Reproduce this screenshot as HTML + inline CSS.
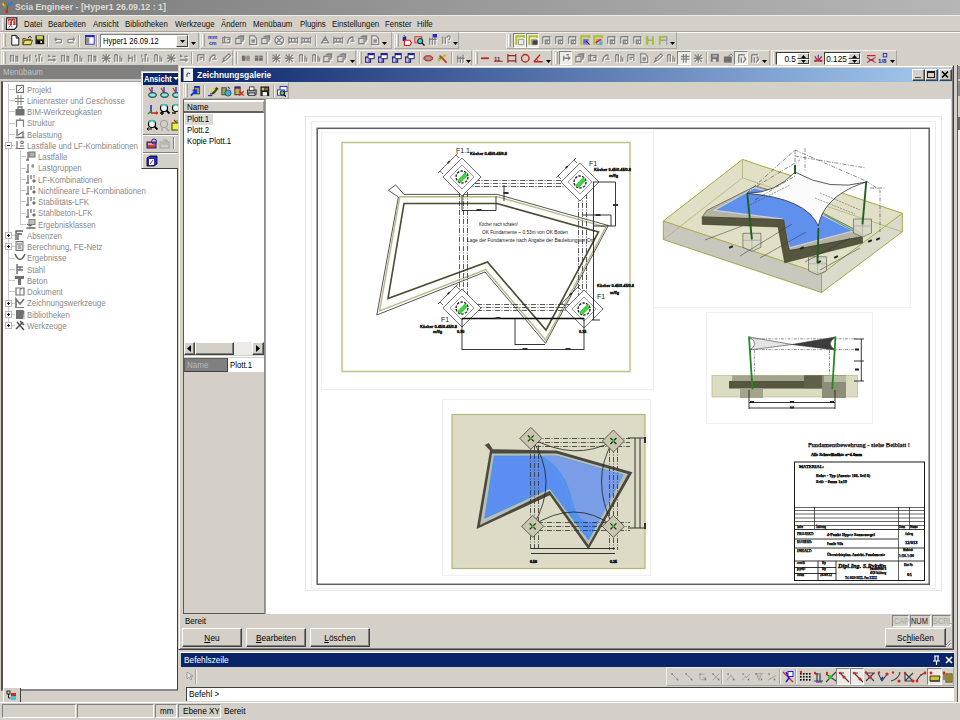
<!DOCTYPE html>
<html><head><meta charset="utf-8"><style>
*{box-sizing:border-box;margin:0;padding:0}
html,body{width:960px;height:720px;overflow:hidden;background:#d4d0c8;font-family:"Liberation Sans",sans-serif;font-size:7.9px;color:#000}
.a{position:absolute}
.t{position:absolute;white-space:nowrap;line-height:10px;transform-origin:0 0}
.i{position:absolute;overflow:visible}
.grip{position:absolute;width:3px;border-left:1px solid #fff;border-right:1px solid #a4a29c}
.sep{position:absolute;width:2px;border-left:1px solid #a4a29c;border-right:1px solid #f4f4f0}
.tbar{position:absolute;border:1px solid;border-color:#f0efea #a8a6a0 #a8a6a0 #f0efea}
.btn{position:absolute;border:1px solid;border-color:#fff #404040 #404040 #fff;box-shadow:inset -1px -1px #808080;text-align:center;font-size:7.9px;line-height:16px}
.tree .t{color:#8a8a8a}
</style></head><body>
<div class="a" style="left:0px;top:0px;width:960px;height:15px;background:linear-gradient(90deg,#7a7a7a,#9a9a9a 50%,#b6b6b6)"></div>
<div class="a" style="left:0px;top:15px;width:960px;height:1px;background:#ecebe6"></div>
<svg class="i" style="left:1px;top:1px" width="13" height="13" viewBox="0 0 13 13"><path d="M2 3 L5 4 L6 12" stroke="#d02020" stroke-width="2.2" fill="none"/><path d="M1.5 2.5 L4 5" stroke="#f0c020" stroke-width="2"/><path d="M4 3 L6 9" stroke="#40c040" stroke-width="2"/><path d="M7 5 L8 3 L12 2" stroke="#2080f0" stroke-width="2.2" fill="none"/><path d="M6.5 5 L6 11" stroke="#e02020" stroke-width="1.5"/></svg>
<div class="t" style="left:15px;top:2px;font-size:8.9px;transform:scaleX(0.885);font-weight:bold;font-size:9.94px;color:#dedcd6">Scia Engineer - [Hyper1 26.09.12 : 1]</div>
<div class="grip" style="left:2px;top:18px;height:12px"></div>
<svg class="i" style="left:6px;top:17px" width="12" height="13" viewBox="0 0 12 13"><path d="M0.8 0.8h10v9l-2.5 2.5h-8z" fill="#fff" stroke="#202020" stroke-width="1.2"/><rect x="2" y="2" width="7.5" height="6" fill="#e02828"/><path d="M3 8V4h2M6.5 8V4h2M3 6h1.5M6.5 6h1.5" stroke="#fff" stroke-width="1"/><path d="M2.5 10.5l2-2 2 1.5" stroke="#404040" fill="none"/></svg>
<div class="t" style="left:24px;top:19px;font-size:8.9px;transform:scaleX(0.885);color:#101010">Datei</div>
<div class="t" style="left:48px;top:19px;font-size:8.9px;transform:scaleX(0.885);color:#101010">Bearbeiten</div>
<div class="t" style="left:93px;top:19px;font-size:8.9px;transform:scaleX(0.885);color:#101010">Ansicht</div>
<div class="t" style="left:125px;top:19px;font-size:8.9px;transform:scaleX(0.885);color:#101010">Bibliotheken</div>
<div class="t" style="left:175px;top:19px;font-size:8.9px;transform:scaleX(0.885);color:#101010">Werkzeuge</div>
<div class="t" style="left:221px;top:19px;font-size:8.9px;transform:scaleX(0.885);color:#101010">Ändern</div>
<div class="t" style="left:253px;top:19px;font-size:8.9px;transform:scaleX(0.885);color:#101010">Menübaum</div>
<div class="t" style="left:300px;top:19px;font-size:8.9px;transform:scaleX(0.885);color:#101010">Plugins</div>
<div class="t" style="left:332px;top:19px;font-size:8.9px;transform:scaleX(0.885);color:#101010">Einstellungen</div>
<div class="t" style="left:385px;top:19px;font-size:8.9px;transform:scaleX(0.885);color:#101010">Fenster</div>
<div class="t" style="left:417px;top:19px;font-size:8.9px;transform:scaleX(0.885);color:#101010">Hilfe</div>
<div class="a" style="left:0px;top:31px;width:960px;height:1px;background:#a8a59e"></div>
<div class="a" style="left:0px;top:32px;width:960px;height:1px;background:#fff"></div>
<div class="tbar" style="left:1px;top:32px;width:198px;height:17px"></div>
<div class="grip" style="left:3px;top:34px;height:13px"></div>
<svg class="i" style="left:10px;top:35px" width="10.5" height="10.5" viewBox="0 0 12 12"><path d="M2 0.5h5l3 3v8h-8z" fill="#fff" stroke="#000"/><path d="M7 0.5v3h3" fill="none" stroke="#000"/></svg>
<svg class="i" style="left:22px;top:35px" width="10.5" height="10.5" viewBox="0 0 12 12"><path d="M1 4h3l1 1h5v6h-9z" fill="#c8c040" stroke="#404000"/><path d="M1 11l2-5h9l-2 5z" fill="#e8e070" stroke="#404000"/><path d="M7 3 Q9 0 11 3" stroke="#000" fill="none"/></svg>
<svg class="i" style="left:35px;top:35px" width="10.5" height="10.5" viewBox="0 0 12 12"><rect x="0.5" y="0.5" width="10" height="10" fill="#202020"/><rect x="2" y="1" width="7" height="4" fill="#d0d040"/><rect x="3" y="7" width="5" height="3" fill="#000"/><rect x="6" y="7" width="2" height="2" fill="#fff"/></svg>
<div class="sep" style="left:47px;top:35px;height:12px"></div>
<svg class="i" style="left:53px;top:35px" width="10.5" height="10.5" viewBox="0 0 12 12"><path d="M2 5 L4 3 M2 5 L4 7 M2 5h6a2 2 0 0 1 0 4h-5" transform="translate(1,1)" stroke="#ffffff" stroke-width="1.5" fill="none"/><path d="M2 5 L4 3 M2 5 L4 7 M2 5h6a2 2 0 0 1 0 4h-5" stroke="#828282" stroke-width="1.5" fill="none"/></svg>
<svg class="i" style="left:66px;top:35px" width="10.5" height="10.5" viewBox="0 0 12 12"><path d="M10 5 L8 3 M10 5 L8 7 M10 5h-6a2 2 0 0 0 0 4h5" transform="translate(1,1)" stroke="#ffffff" stroke-width="1.5" fill="none"/><path d="M10 5 L8 3 M10 5 L8 7 M10 5h-6a2 2 0 0 0 0 4h5" stroke="#828282" stroke-width="1.5" fill="none"/></svg>
<div class="sep" style="left:78px;top:35px;height:12px"></div>
<svg class="i" style="left:85px;top:35px" width="10.5" height="10.5" viewBox="0 0 12 12"><rect x="0.5" y="0.5" width="10" height="10" fill="#fff" stroke="#2020c0"/><rect x="0.5" y="0.5" width="10" height="2" fill="#2020c0"/><rect x="1" y="3" width="4" height="7" fill="#909090"/></svg>
<div class="sep" style="left:96px;top:35px;height:12px"></div>
<div class="a" style="left:100px;top:34px;width:89px;height:14px;background:#fff;border:1px solid;border-color:#808080 #fff #fff #808080"></div>
<div class="t" style="left:103px;top:36px;font-size:8.9px;transform:scaleX(0.885);font-size:8.5px">Hyper1 26.09.12</div>
<div class="a" style="left:176px;top:35px;width:12px;height:12px;background:#d4d0c8;border:1px solid;border-color:#fff #404040 #404040 #fff"></div>
<svg class="i" style="left:180px;top:40px" width="5" height="3" viewBox="0 0 5 3"><path d="M0 0h5l-2.5 3z" fill="#000"/></svg>
<svg class="i" style="left:191px;top:42px" width="5" height="3" viewBox="0 0 5 3"><path d="M0 0h5l-2.5 3z" fill="#000"/></svg>
<div class="tbar" style="left:200px;top:32px;width:192px;height:17px"></div>
<div class="grip" style="left:202px;top:34px;height:13px"></div>
<svg class="i" style="left:208px;top:35px" width="10.5" height="10.5" viewBox="0 0 12 12"><text x="0" y="5" font-size="6" font-weight="bold" fill="#3030b0" font-family="Liberation Sans">mm</text><text x="1" y="11" font-size="6" font-weight="bold" fill="#3030b0" font-family="Liberation Sans">cm</text></svg>
<svg class="i" style="left:222px;top:35px" width="10.5" height="10.5" viewBox="0 0 12 12"><path d="M1 3h8v6h-8zM3 1v8M6 5h4" transform="translate(1,1)" stroke="#ffffff" stroke-width="1.5" fill="none"/><path d="M1 3h8v6h-8zM3 1v8M6 5h4" stroke="#828282" stroke-width="1.5" fill="none"/></svg>
<svg class="i" style="left:235px;top:35px" width="10.5" height="10.5" viewBox="0 0 12 12"><path d="M1 4h6v6h-6zM3 2h6v6M5 1h5v5" transform="translate(1,1)" stroke="#ffffff" stroke-width="1.5" fill="none"/><path d="M1 4h6v6h-6zM3 2h6v6M5 1h5v5" stroke="#828282" stroke-width="1.5" fill="none"/></svg>
<svg class="i" style="left:248px;top:35px" width="10.5" height="10.5" viewBox="0 0 12 12"><path d="M2 1h5l3 3v7h-8zM4 6h4M4 8h4" transform="translate(1,1)" stroke="#ffffff" stroke-width="1.5" fill="none"/><path d="M2 1h5l3 3v7h-8zM4 6h4M4 8h4" stroke="#828282" stroke-width="1.5" fill="none"/></svg>
<svg class="i" style="left:261px;top:35px" width="10.5" height="10.5" viewBox="0 0 12 12"><path d="M1 4h6v6h-6zM3 2h6v6M5 1h5v5" transform="translate(1,1)" stroke="#ffffff" stroke-width="1.5" fill="none"/><path d="M1 4h6v6h-6zM3 2h6v6M5 1h5v5" stroke="#828282" stroke-width="1.5" fill="none"/></svg>
<svg class="i" style="left:274px;top:35px" width="10.5" height="10.5" viewBox="0 0 12 12"><path d="M6 1a5 5 0 1 0 .1 0M3 3l6 6M9 3l-6 6" transform="translate(1,1)" stroke="#ffffff" stroke-width="1.5" fill="none"/><path d="M6 1a5 5 0 1 0 .1 0M3 3l6 6M9 3l-6 6" stroke="#828282" stroke-width="1.5" fill="none"/></svg>
<svg class="i" style="left:288px;top:35px" width="10.5" height="10.5" viewBox="0 0 12 12"><path d="M1 2v8M11 2v8M1 4h10M1 8h10M4 4v4M8 4v4" transform="translate(1,1)" stroke="#ffffff" stroke-width="1.5" fill="none"/><path d="M1 2v8M11 2v8M1 4h10M1 8h10M4 4v4M8 4v4" stroke="#828282" stroke-width="1.5" fill="none"/></svg>
<svg class="i" style="left:301px;top:35px" width="10.5" height="10.5" viewBox="0 0 12 12"><path d="M1 2v8M11 2v8M1 4h10M1 8h10M4 4v4M8 4v4" transform="translate(1,1)" stroke="#ffffff" stroke-width="1.5" fill="none"/><path d="M1 2v8M11 2v8M1 4h10M1 8h10M4 4v4M8 4v4" stroke="#828282" stroke-width="1.5" fill="none"/></svg>
<div class="sep" style="left:315px;top:35px;height:12px"></div>
<svg class="i" style="left:320px;top:35px" width="10.5" height="10.5" viewBox="0 0 12 12"><path d="M2 9 L6 2 L10 9 zM4 6h4" transform="translate(1,1)" stroke="#ffffff" stroke-width="1.5" fill="none"/><path d="M2 9 L6 2 L10 9 zM4 6h4" stroke="#828282" stroke-width="1.5" fill="none"/></svg>
<svg class="i" style="left:333px;top:35px" width="10.5" height="10.5" viewBox="0 0 12 12"><path d="M1 2v8M11 2v8M1 4h10M1 8h10M4 4v4M8 4v4" transform="translate(1,1)" stroke="#ffffff" stroke-width="1.5" fill="none"/><path d="M1 2v8M11 2v8M1 4h10M1 8h10M4 4v4M8 4v4" stroke="#828282" stroke-width="1.5" fill="none"/></svg>
<svg class="i" style="left:346px;top:35px" width="10.5" height="10.5" viewBox="0 0 12 12"><path d="M2 10 Q2 3 8 2M8 2v4M5 7h5" transform="translate(1,1)" stroke="#ffffff" stroke-width="1.5" fill="none"/><path d="M2 10 Q2 3 8 2M8 2v4M5 7h5" stroke="#828282" stroke-width="1.5" fill="none"/></svg>
<svg class="i" style="left:358px;top:35px" width="10.5" height="10.5" viewBox="0 0 12 12"><path d="M1 4h6v6h-6zM3 2h6v6M5 1h5v5" transform="translate(1,1)" stroke="#ffffff" stroke-width="1.5" fill="none"/><path d="M1 4h6v6h-6zM3 2h6v6M5 1h5v5" stroke="#828282" stroke-width="1.5" fill="none"/></svg>
<svg class="i" style="left:370px;top:35px" width="10.5" height="10.5" viewBox="0 0 12 12"><path d="M2 1h5l3 3v7h-8zM4 6h4M4 8h4" transform="translate(1,1)" stroke="#ffffff" stroke-width="1.5" fill="none"/><path d="M2 1h5l3 3v7h-8zM4 6h4M4 8h4" stroke="#828282" stroke-width="1.5" fill="none"/></svg>
<svg class="i" style="left:382px;top:42px" width="5" height="3" viewBox="0 0 5 3"><path d="M0 0h5l-2.5 3z" fill="#000"/></svg>
<div class="tbar" style="left:394px;top:32px;width:65px;height:17px"></div>
<div class="grip" style="left:396px;top:34px;height:13px"></div>
<svg class="i" style="left:401px;top:35px" width="10.5" height="10.5" viewBox="0 0 12 12"><path d="M2 2h4v5h-4z" fill="#2020a0"/><path d="M3 0l2 2" stroke="#2020a0"/><path d="M4 6h6l2 3-2 3h-6z" fill="#fff" stroke="#d02020" stroke-width="1.3"/></svg>
<svg class="i" style="left:414px;top:35px" width="10.5" height="10.5" viewBox="0 0 12 12"><rect x="1" y="2" width="8" height="7" fill="#e8c0b0" stroke="#b03030"/><circle cx="7" cy="7" r="3" fill="#40d0d0" stroke="#000"/><path d="M9 9l3 3" stroke="#000" stroke-width="1.5"/></svg>
<svg class="i" style="left:428px;top:35px" width="10.5" height="10.5" viewBox="0 0 12 12"><path d="M2 3v8M5 3v8M8 3v8M1 5h9" transform="translate(1,1)" stroke="#ffffff" stroke-width="1.5" fill="none"/><path d="M2 3v8M5 3v8M8 3v8M1 5h9" stroke="#828282" stroke-width="1.5" fill="none"/></svg>
<svg class="i" style="left:430px;top:34px" width="10.5" height="10.5" viewBox="0 0 12 12"><rect x="3" y="0" width="5" height="4" fill="#2030d0"/></svg>
<svg class="i" style="left:441px;top:35px" width="10.5" height="10.5" viewBox="0 0 12 12"><path d="M2 2v8M5 2v8M7 3 Q7 1 9 1 Q11 1 10 4 L9 6M9 8v1" transform="translate(1,1)" stroke="#ffffff" stroke-width="1.5" fill="none"/><path d="M2 2v8M5 2v8M7 3 Q7 1 9 1 Q11 1 10 4 L9 6M9 8v1" stroke="#828282" stroke-width="1.5" fill="none"/></svg>
<svg class="i" style="left:453px;top:42px" width="5" height="3" viewBox="0 0 5 3"><path d="M0 0h5l-2.5 3z" fill="#000"/></svg>
<div class="tbar" style="left:506px;top:32px;width:171px;height:17px"></div>
<div class="grip" style="left:508px;top:34px;height:13px"></div>
<div class="a" style="left:513px;top:33px;width:13px;height:15px;border:1px solid;border-color:#808080 #fff #fff #808080;background:#ecebe6"></div>
<div class="a" style="left:526px;top:33px;width:13px;height:15px;border:1px solid;border-color:#808080 #fff #fff #808080;background:#ecebe6"></div>
<svg class="i" style="left:515px;top:35px" width="10.5" height="10.5" viewBox="0 0 12 12"><path d="M1.5 11v-9.5h9v2" stroke="#b0c020" stroke-width="2.2" fill="none"/><path d="M4 5h6v6h-6z" fill="none" stroke="#909090"/></svg>
<svg class="i" style="left:528px;top:35px" width="10.5" height="10.5" viewBox="0 0 12 12"><path d="M1.5 11v-9.5h9v2" stroke="#b0c020" stroke-width="2.2" fill="none"/><path d="M4 5h6v6h-6z" fill="none" stroke="#909090"/><rect x="5" y="6" width="6" height="5" fill="#404040"/></svg>
<svg class="i" style="left:541px;top:35px" width="10.5" height="10.5" viewBox="0 0 12 12"><path d="M2 2h8v3M2 2v8M5 6h5v4h-5zM7 6v4" transform="translate(1,1)" stroke="#ffffff" stroke-width="1.5" fill="none"/><path d="M2 2h8v3M2 2v8M5 6h5v4h-5zM7 6v4" stroke="#828282" stroke-width="1.5" fill="none"/></svg>
<svg class="i" style="left:554px;top:35px" width="10.5" height="10.5" viewBox="0 0 12 12"><path d="M2 2h8v3M2 2v8M5 6h5v4h-5zM7 6v4" transform="translate(1,1)" stroke="#ffffff" stroke-width="1.5" fill="none"/><path d="M2 2h8v3M2 2v8M5 6h5v4h-5zM7 6v4" stroke="#828282" stroke-width="1.5" fill="none"/></svg>
<svg class="i" style="left:567px;top:35px" width="10.5" height="10.5" viewBox="0 0 12 12"><path d="M2 2h8v3M2 2v8M5 6h5v4h-5zM7 6v4" transform="translate(1,1)" stroke="#ffffff" stroke-width="1.5" fill="none"/><path d="M2 2h8v3M2 2v8M5 6h5v4h-5zM7 6v4" stroke="#828282" stroke-width="1.5" fill="none"/></svg>
<svg class="i" style="left:580px;top:35px" width="10.5" height="10.5" viewBox="0 0 12 12"><path d="M1.5 11v-9.5h9v2" stroke="#b0c020" stroke-width="2.2" fill="none"/><path d="M4 5h6v6h-6z" fill="none" stroke="#909090"/><rect x="4" y="5" width="5" height="5" fill="#6060e0"/><path d="M7 7l4 4" stroke="#000"/></svg>
<svg class="i" style="left:593px;top:35px" width="10.5" height="10.5" viewBox="0 0 12 12"><path d="M1.5 11v-9.5h9v2" stroke="#b0c020" stroke-width="2.2" fill="none"/><path d="M4 5h6v6h-6z" fill="none" stroke="#909090"/><path d="M3 9l6-4" stroke="#e02020" stroke-width="2"/><circle cx="9" cy="9" r="2" fill="#20c0f0"/></svg>
<svg class="i" style="left:606px;top:35px" width="10.5" height="10.5" viewBox="0 0 12 12"><path d="M2 2h8v3M2 2v8M5 6h5v4h-5zM7 6v4" transform="translate(1,1)" stroke="#ffffff" stroke-width="1.5" fill="none"/><path d="M2 2h8v3M2 2v8M5 6h5v4h-5zM7 6v4" stroke="#828282" stroke-width="1.5" fill="none"/></svg>
<svg class="i" style="left:619px;top:35px" width="10.5" height="10.5" viewBox="0 0 12 12"><path d="M2 2h8v3M2 2v8M5 6h5v4h-5zM7 6v4" transform="translate(1,1)" stroke="#ffffff" stroke-width="1.5" fill="none"/><path d="M2 2h8v3M2 2v8M5 6h5v4h-5zM7 6v4" stroke="#828282" stroke-width="1.5" fill="none"/></svg>
<svg class="i" style="left:632px;top:35px" width="10.5" height="10.5" viewBox="0 0 12 12"><path d="M2 2h8v3M2 2v8M5 6h5v4h-5zM7 6v4" transform="translate(1,1)" stroke="#ffffff" stroke-width="1.5" fill="none"/><path d="M2 2h8v3M2 2v8M5 6h5v4h-5zM7 6v4" stroke="#828282" stroke-width="1.5" fill="none"/></svg>
<svg class="i" style="left:645px;top:35px" width="10.5" height="10.5" viewBox="0 0 12 12"><path d="M3 1v10M3 6h6M9 1v10" stroke="#a0a0a0" stroke-width="1.6"/><path d="M2 1v10" stroke="#b0c020" stroke-width="2"/><path d="M9 4v7" stroke="#b0c020" stroke-width="2"/></svg>
<svg class="i" style="left:658px;top:35px" width="10.5" height="10.5" viewBox="0 0 12 12"><path d="M2 11v-9h8v9M2 6h8" stroke="#a0a0a0" stroke-width="1.5" fill="none"/><path d="M2 11v-9h5" stroke="#b0c020" stroke-width="2" fill="none"/></svg>
<svg class="i" style="left:670px;top:42px" width="5" height="3" viewBox="0 0 5 3"><path d="M0 0h5l-2.5 3z" fill="#000"/></svg>
<div class="tbar" style="left:1px;top:50px;width:232px;height:16px"></div>
<div class="grip" style="left:3px;top:52px;height:12px"></div>
<svg class="i" style="left:9px;top:53px" width="10.5" height="10.5" viewBox="0 0 12 12"><path d="M2 3v7M5 2v8M8 4v6M10 3v7M1 3h3M7 4h3" transform="translate(1,1)" stroke="#ffffff" stroke-width="1.5" fill="none"/><path d="M2 3v7M5 2v8M8 4v6M10 3v7M1 3h3M7 4h3" stroke="#828282" stroke-width="1.5" fill="none"/></svg>
<svg class="i" style="left:22px;top:53px" width="10.5" height="10.5" viewBox="0 0 12 12"><path d="M2 2v3M2 6v4M6 4v6M9 2v8M1 6h4" transform="translate(1,1)" stroke="#ffffff" stroke-width="1.5" fill="none"/><path d="M2 2v3M2 6v4M6 4v6M9 2v8M1 6h4" stroke="#828282" stroke-width="1.5" fill="none"/></svg>
<svg class="i" style="left:34px;top:53px" width="10.5" height="10.5" viewBox="0 0 12 12"><path d="M2 2v3M3 6v4M6 3v7M9 5v5M5 2h3" transform="translate(1,1)" stroke="#ffffff" stroke-width="1.5" fill="none"/><path d="M2 2v3M3 6v4M6 3v7M9 5v5M5 2h3" stroke="#828282" stroke-width="1.5" fill="none"/></svg>
<svg class="i" style="left:47px;top:53px" width="10.5" height="10.5" viewBox="0 0 12 12"><path d="M1 4h3M6 4h4M1 8h9M2 2v2M8 6v4" transform="translate(1,1)" stroke="#ffffff" stroke-width="1.5" fill="none"/><path d="M1 4h3M6 4h4M1 8h9M2 2v2M8 6v4" stroke="#828282" stroke-width="1.5" fill="none"/></svg>
<svg class="i" style="left:60px;top:53px" width="10.5" height="10.5" viewBox="0 0 12 12"><path d="M2 3v7M5 2v8M8 4v6M10 3v7M1 3h3M7 4h3" transform="translate(1,1)" stroke="#ffffff" stroke-width="1.5" fill="none"/><path d="M2 3v7M5 2v8M8 4v6M10 3v7M1 3h3M7 4h3" stroke="#828282" stroke-width="1.5" fill="none"/></svg>
<svg class="i" style="left:73px;top:53px" width="10.5" height="10.5" viewBox="0 0 12 12"><path d="M2 2v8M5 2v8M8 3v7M2 2h3M10 5v5" transform="translate(1,1)" stroke="#ffffff" stroke-width="1.5" fill="none"/><path d="M2 2v8M5 2v8M8 3v7M2 2h3M10 5v5" stroke="#828282" stroke-width="1.5" fill="none"/></svg>
<svg class="i" style="left:87px;top:53px" width="10.5" height="10.5" viewBox="0 0 12 12"><path d="M2 3v7M5 2v8M8 4v6M10 3v7M1 3h3M7 4h3" transform="translate(1,1)" stroke="#ffffff" stroke-width="1.5" fill="none"/><path d="M2 3v7M5 2v8M8 4v6M10 3v7M1 3h3M7 4h3" stroke="#828282" stroke-width="1.5" fill="none"/></svg>
<svg class="i" style="left:101px;top:53px" width="10.5" height="10.5" viewBox="0 0 12 12"><path d="M6 1v10M1 6h10M2 2l8 8M10 2l-8 8" transform="translate(1,1)" stroke="#ffffff" stroke-width="1.5" fill="none"/><path d="M6 1v10M1 6h10M2 2l8 8M10 2l-8 8" stroke="#828282" stroke-width="1.5" fill="none"/></svg>
<svg class="i" style="left:113px;top:53px" width="10.5" height="10.5" viewBox="0 0 12 12"><path d="M2 2v8M5 2v8M8 3v7M2 2h3M10 5v5" transform="translate(1,1)" stroke="#ffffff" stroke-width="1.5" fill="none"/><path d="M2 2v8M5 2v8M8 3v7M2 2h3M10 5v5" stroke="#828282" stroke-width="1.5" fill="none"/></svg>
<svg class="i" style="left:127px;top:53px" width="10.5" height="10.5" viewBox="0 0 12 12"><path d="M2 2v3M2 6v4M6 4v6M9 2v8M1 6h4" transform="translate(1,1)" stroke="#ffffff" stroke-width="1.5" fill="none"/><path d="M2 2v3M2 6v4M6 4v6M9 2v8M1 6h4" stroke="#828282" stroke-width="1.5" fill="none"/></svg>
<svg class="i" style="left:140px;top:53px" width="10.5" height="10.5" viewBox="0 0 12 12"><path d="M2 2v3M3 6v4M6 3v7M9 5v5M5 2h3" transform="translate(1,1)" stroke="#ffffff" stroke-width="1.5" fill="none"/><path d="M2 2v3M3 6v4M6 3v7M9 5v5M5 2h3" stroke="#828282" stroke-width="1.5" fill="none"/></svg>
<svg class="i" style="left:153px;top:53px" width="10.5" height="10.5" viewBox="0 0 12 12"><path d="M2 2v8M5 2v8M8 3v7M2 2h3M10 5v5" transform="translate(1,1)" stroke="#ffffff" stroke-width="1.5" fill="none"/><path d="M2 2v8M5 2v8M8 3v7M2 2h3M10 5v5" stroke="#828282" stroke-width="1.5" fill="none"/></svg>
<svg class="i" style="left:166px;top:53px" width="10.5" height="10.5" viewBox="0 0 12 12"><path d="M6 1v10M1 6h10M2 2l8 8M10 2l-8 8" transform="translate(1,1)" stroke="#ffffff" stroke-width="1.5" fill="none"/><path d="M6 1v10M1 6h10M2 2l8 8M10 2l-8 8" stroke="#828282" stroke-width="1.5" fill="none"/></svg>
<svg class="i" style="left:179px;top:53px" width="10.5" height="10.5" viewBox="0 0 12 12"><path d="M1 4h3M6 4h4M1 8h9M2 2v2M8 6v4" transform="translate(1,1)" stroke="#ffffff" stroke-width="1.5" fill="none"/><path d="M1 4h3M6 4h4M1 8h9M2 2v2M8 6v4" stroke="#828282" stroke-width="1.5" fill="none"/></svg>
<div class="sep" style="left:191px;top:52px;height:12px"></div>
<svg class="i" style="left:196px;top:53px" width="10.5" height="10.5" viewBox="0 0 12 12"><path d="M2 2h7v7M2 2v8M4 5h4M4 7h3" transform="translate(1,1)" stroke="#ffffff" stroke-width="1.5" fill="none"/><path d="M2 2h7v7M2 2v8M4 5h4M4 7h3" stroke="#828282" stroke-width="1.5" fill="none"/></svg>
<svg class="i" style="left:208px;top:53px" width="10.5" height="10.5" viewBox="0 0 12 12"><path d="M2 10 Q2 3 8 2M8 2v4M5 7h5" transform="translate(1,1)" stroke="#ffffff" stroke-width="1.5" fill="none"/><path d="M2 10 Q2 3 8 2M8 2v4M5 7h5" stroke="#828282" stroke-width="1.5" fill="none"/></svg>
<svg class="i" style="left:221px;top:53px" width="10.5" height="10.5" viewBox="0 0 12 12"><path d="M2 10 L4 6 L9 1 L11 3 L6 8 zM2 6h3" transform="translate(1,1)" stroke="#ffffff" stroke-width="1.5" fill="none"/><path d="M2 10 L4 6 L9 1 L11 3 L6 8 zM2 6h3" stroke="#828282" stroke-width="1.5" fill="none"/></svg>
<div class="tbar" style="left:234px;top:50px;width:122px;height:16px"></div>
<div class="sep" style="left:236px;top:52px;height:12px"></div>
<svg class="i" style="left:241px;top:53px" width="10.5" height="10.5" viewBox="0 0 12 12"><rect x="1" y="3" width="4" height="6" fill="#707070"/><rect x="6" y="3" width="4" height="6" fill="#909090"/><path d="M5 6h1" stroke="#606060"/></svg>
<svg class="i" style="left:254px;top:53px" width="10.5" height="10.5" viewBox="0 0 12 12"><rect x="1" y="3" width="4" height="6" fill="#707070"/><rect x="6" y="3" width="4" height="6" fill="#707070"/><path d="M1 5h9" stroke="#a0a0a0"/></svg>
<div class="sep" style="left:266px;top:52px;height:12px"></div>
<svg class="i" style="left:271px;top:53px" width="10.5" height="10.5" viewBox="0 0 12 12"><path d="M6 1v10M1 6h10M2 2l8 8M10 2l-8 8" transform="translate(1,1)" stroke="#ffffff" stroke-width="1.5" fill="none"/><path d="M6 1v10M1 6h10M2 2l8 8M10 2l-8 8" stroke="#828282" stroke-width="1.5" fill="none"/></svg>
<svg class="i" style="left:284px;top:53px" width="10.5" height="10.5" viewBox="0 0 12 12"><path d="M6 1v10M1 6h10M2 2l8 8M10 2l-8 8" transform="translate(1,1)" stroke="#ffffff" stroke-width="1.5" fill="none"/><path d="M6 1v10M1 6h10M2 2l8 8M10 2l-8 8" stroke="#828282" stroke-width="1.5" fill="none"/></svg>
<svg class="i" style="left:298px;top:53px" width="10.5" height="10.5" viewBox="0 0 12 12"><path d="M2 2v8M5 2v8M8 3v7M2 2h3M10 5v5" transform="translate(1,1)" stroke="#ffffff" stroke-width="1.5" fill="none"/><path d="M2 2v8M5 2v8M8 3v7M2 2h3M10 5v5" stroke="#828282" stroke-width="1.5" fill="none"/></svg>
<svg class="i" style="left:311px;top:53px" width="10.5" height="10.5" viewBox="0 0 12 12"><path d="M2 2v8M5 2v8M8 3v7M2 2h3M10 5v5" transform="translate(1,1)" stroke="#ffffff" stroke-width="1.5" fill="none"/><path d="M2 2v8M5 2v8M8 3v7M2 2h3M10 5v5" stroke="#828282" stroke-width="1.5" fill="none"/></svg>
<svg class="i" style="left:323px;top:53px" width="10.5" height="10.5" viewBox="0 0 12 12"><path d="M1 4h6v6h-6zM3 2h6v6M5 1h5v5" transform="translate(1,1)" stroke="#ffffff" stroke-width="1.5" fill="none"/><path d="M1 4h6v6h-6zM3 2h6v6M5 1h5v5" stroke="#828282" stroke-width="1.5" fill="none"/></svg>
<svg class="i" style="left:337px;top:53px" width="10.5" height="10.5" viewBox="0 0 12 12"><path d="M1 4h6v6h-6zM3 2h6v6M5 1h5v5" transform="translate(1,1)" stroke="#ffffff" stroke-width="1.5" fill="none"/><path d="M1 4h6v6h-6zM3 2h6v6M5 1h5v5" stroke="#828282" stroke-width="1.5" fill="none"/></svg>
<svg class="i" style="left:350px;top:60px" width="5" height="3" viewBox="0 0 5 3"><path d="M0 0h5l-2.5 3z" fill="#000"/></svg>
<div class="tbar" style="left:357px;top:50px;width:115px;height:16px"></div>
<div class="grip" style="left:359px;top:52px;height:12px"></div>
<svg class="i" style="left:365px;top:53px" width="10.5" height="10.5" viewBox="0 0 12 12"><rect x="0.5" y="4.5" width="6" height="6" fill="#6868c8" stroke="#101060"/><rect x="3.5" y="0.5" width="7" height="6" fill="#fff" stroke="#101060"/><rect x="3.5" y="0.5" width="7" height="2" fill="#2020a0"/><rect x="1" y="6" width="3" height="4" fill="#c0c0f0"/></svg>
<svg class="i" style="left:378px;top:53px" width="10.5" height="10.5" viewBox="0 0 12 12"><rect x="0.5" y="4.5" width="6" height="6" fill="#6868c8" stroke="#101060"/><rect x="3.5" y="0.5" width="7" height="6" fill="#fff" stroke="#101060"/><rect x="3.5" y="0.5" width="7" height="2" fill="#2020a0"/><rect x="1" y="6" width="3" height="4" fill="#c0c0f0"/></svg>
<svg class="i" style="left:392px;top:53px" width="10.5" height="10.5" viewBox="0 0 12 12"><rect x="0.5" y="4.5" width="6" height="6" fill="#6868c8" stroke="#101060"/><rect x="3.5" y="0.5" width="7" height="6" fill="#fff" stroke="#101060"/><rect x="3.5" y="0.5" width="7" height="2" fill="#2020a0"/><rect x="1" y="6" width="3" height="4" fill="#c0c0f0"/></svg>
<svg class="i" style="left:405px;top:53px" width="10.5" height="10.5" viewBox="0 0 12 12"><rect x="0.5" y="4.5" width="6" height="6" fill="#6868c8" stroke="#101060"/><rect x="3.5" y="0.5" width="7" height="6" fill="#fff" stroke="#101060"/><rect x="3.5" y="0.5" width="7" height="2" fill="#2020a0"/><rect x="1" y="6" width="3" height="4" fill="#c0c0f0"/></svg>
<div class="sep" style="left:419px;top:52px;height:12px"></div>
<svg class="i" style="left:423px;top:53px" width="10.5" height="10.5" viewBox="0 0 12 12"><ellipse cx="6" cy="6" rx="5" ry="3" fill="#e06060" stroke="#a02020"/><ellipse cx="6" cy="6" rx="2.5" ry="1.5" fill="#60c0c0"/></svg>
<svg class="i" style="left:437px;top:53px" width="10.5" height="10.5" viewBox="0 0 12 12"><path d="M1 9 L10 2" stroke="#c0c020" stroke-width="2.5"/><path d="M3 3 L11 11" stroke="#e02020" stroke-width="1.8"/><path d="M2 6h5" stroke="#40a040" stroke-width="1.5"/></svg>
<div class="sep" style="left:451px;top:52px;height:12px"></div>
<svg class="i" style="left:456px;top:53px" width="10.5" height="10.5" viewBox="0 0 12 12"><path d="M2 3v8M5 4v7M8 2v9M1 6h9" transform="translate(1,1)" stroke="#ffffff" stroke-width="1.5" fill="none"/><path d="M2 3v8M5 4v7M8 2v9M1 6h9" stroke="#828282" stroke-width="1.5" fill="none"/></svg>
<svg class="i" style="left:466px;top:60px" width="5" height="3" viewBox="0 0 5 3"><path d="M0 0h5l-2.5 3z" fill="#000"/></svg>
<div class="tbar" style="left:473px;top:50px;width:79px;height:16px"></div>
<div class="grip" style="left:475px;top:52px;height:12px"></div>
<svg class="i" style="left:481px;top:53px" width="10.5" height="10.5" viewBox="0 0 12 12"><path d="M0 6h9" stroke="#c02020" stroke-width="2"/></svg>
<svg class="i" style="left:494px;top:53px" width="10.5" height="10.5" viewBox="0 0 12 12"><text x="0" y="9" font-size="7" font-weight="bold" fill="#802020" font-family="Liberation Sans">11</text><path d="M0 9.5h10" stroke="#802020"/></svg>
<svg class="i" style="left:507px;top:53px" width="10.5" height="10.5" viewBox="0 0 12 12"><path d="M1 1v10M10 1v10M1 3h9M1 9h9" stroke="#a02020" stroke-width="1.3" fill="none"/></svg>
<svg class="i" style="left:520px;top:53px" width="10.5" height="10.5" viewBox="0 0 12 12"><circle cx="6" cy="6" r="4.3" fill="none" stroke="#c02020" stroke-width="1.5"/></svg>
<svg class="i" style="left:533px;top:53px" width="10.5" height="10.5" viewBox="0 0 12 12"><path d="M1 10h10M1 10 L8 2" stroke="#c02020" stroke-width="1.5" fill="none"/><path d="M4 7 Q6 8 6 10" stroke="#c02020" fill="none"/></svg>
<svg class="i" style="left:546px;top:60px" width="5" height="3" viewBox="0 0 5 3"><path d="M0 0h5l-2.5 3z" fill="#000"/></svg>
<div class="tbar" style="left:553px;top:50px;width:217px;height:16px"></div>
<div class="grip" style="left:555px;top:52px;height:12px"></div>
<div class="a" style="left:559px;top:51px;width:13px;height:14px;border:1px solid;border-color:#808080 #fff #fff #808080;background:#ecebe6"></div>
<svg class="i" style="left:562px;top:53px" width="10.5" height="10.5" viewBox="0 0 12 12"><path d="M2 3v6M2 6h7M7 4l2 2-2 2M5 2h3" transform="translate(1,1)" stroke="#ffffff" stroke-width="1.5" fill="none"/><path d="M2 3v6M2 6h7M7 4l2 2-2 2M5 2h3" stroke="#828282" stroke-width="1.5" fill="none"/></svg>
<svg class="i" style="left:575px;top:53px" width="10.5" height="10.5" viewBox="0 0 12 12"><path d="M1 4h6v6h-6zM3 2h6v6M5 1h5v5" transform="translate(1,1)" stroke="#ffffff" stroke-width="1.5" fill="none"/><path d="M1 4h6v6h-6zM3 2h6v6M5 1h5v5" stroke="#828282" stroke-width="1.5" fill="none"/></svg>
<svg class="i" style="left:588px;top:53px" width="10.5" height="10.5" viewBox="0 0 12 12"><path d="M1 3h8v6h-8zM3 1v8M6 5h4" transform="translate(1,1)" stroke="#ffffff" stroke-width="1.5" fill="none"/><path d="M1 3h8v6h-8zM3 1v8M6 5h4" stroke="#828282" stroke-width="1.5" fill="none"/></svg>
<svg class="i" style="left:601px;top:53px" width="10.5" height="10.5" viewBox="0 0 12 12"><path d="M2 10 Q2 3 8 2M8 2v4M5 7h5" transform="translate(1,1)" stroke="#ffffff" stroke-width="1.5" fill="none"/><path d="M2 10 Q2 3 8 2M8 2v4M5 7h5" stroke="#828282" stroke-width="1.5" fill="none"/></svg>
<svg class="i" style="left:614px;top:53px" width="10.5" height="10.5" viewBox="0 0 12 12"><path d="M2 2v8M5 2v8M8 3v7M2 2h3M10 5v5" transform="translate(1,1)" stroke="#ffffff" stroke-width="1.5" fill="none"/><path d="M2 2v8M5 2v8M8 3v7M2 2h3M10 5v5" stroke="#828282" stroke-width="1.5" fill="none"/></svg>
<svg class="i" style="left:626px;top:53px" width="10.5" height="10.5" viewBox="0 0 12 12"><path d="M2 2h7v7M2 2v8M4 5h4M4 7h3" transform="translate(1,1)" stroke="#ffffff" stroke-width="1.5" fill="none"/><path d="M2 2h7v7M2 2v8M4 5h4M4 7h3" stroke="#828282" stroke-width="1.5" fill="none"/></svg>
<svg class="i" style="left:639px;top:53px" width="10.5" height="10.5" viewBox="0 0 12 12"><path d="M2 1h5l3 3v7h-8zM4 6h4M4 8h4" transform="translate(1,1)" stroke="#ffffff" stroke-width="1.5" fill="none"/><path d="M2 1h5l3 3v7h-8zM4 6h4M4 8h4" stroke="#828282" stroke-width="1.5" fill="none"/></svg>
<svg class="i" style="left:653px;top:53px" width="10.5" height="10.5" viewBox="0 0 12 12"><path d="M2 10 L4 6 L9 1 L11 3 L6 8 zM2 6h3" transform="translate(1,1)" stroke="#ffffff" stroke-width="1.5" fill="none"/><path d="M2 10 L4 6 L9 1 L11 3 L6 8 zM2 6h3" stroke="#828282" stroke-width="1.5" fill="none"/></svg>
<svg class="i" style="left:666px;top:53px" width="10.5" height="10.5" viewBox="0 0 12 12"><path d="M2 2v8M5 2v8M8 3v7M2 2h3M10 5v5" transform="translate(1,1)" stroke="#ffffff" stroke-width="1.5" fill="none"/><path d="M2 2v8M5 2v8M8 3v7M2 2h3M10 5v5" stroke="#828282" stroke-width="1.5" fill="none"/></svg>
<div class="a" style="left:677px;top:51px;width:14px;height:14px;border:1px solid;border-color:#808080 #fff #fff #808080;background:#ecebe6"></div>
<svg class="i" style="left:680px;top:53px" width="10.5" height="10.5" viewBox="0 0 12 12"><path d="M1 4h10M1 7h10M4 1v10M7 1v10" transform="translate(1,1)" stroke="#ffffff" stroke-width="1.5" fill="none"/><path d="M1 4h10M1 7h10M4 1v10M7 1v10" stroke="#828282" stroke-width="1.5" fill="none"/></svg>
<svg class="i" style="left:693px;top:53px" width="10.5" height="10.5" viewBox="0 0 12 12"><path d="M6 1v10M1 6h10M2 2l8 8M10 2l-8 8" transform="translate(1,1)" stroke="#ffffff" stroke-width="1.5" fill="none"/><path d="M6 1v10M1 6h10M2 2l8 8M10 2l-8 8" stroke="#828282" stroke-width="1.5" fill="none"/></svg>
<div class="sep" style="left:706px;top:52px;height:12px"></div>
<svg class="i" style="left:710px;top:53px" width="10.5" height="10.5" viewBox="0 0 12 12"><rect x="1" y="1" width="9" height="9" fill="#707070"/><rect x="3" y="2" width="5" height="3" fill="#b0b0b0"/><rect x="3" y="7" width="4" height="3" fill="#e0e0e0"/></svg>
<svg class="i" style="left:723px;top:53px" width="10.5" height="10.5" viewBox="0 0 12 12"><rect x="1" y="4" width="9" height="7" fill="#707070"/><path d="M6 4l3-3 2 2" stroke="#606060" fill="none"/></svg>
<div class="a" style="left:734px;top:51px;width:14px;height:14px;border:1px solid;border-color:#808080 #fff #fff #808080;background:#ecebe6"></div>
<svg class="i" style="left:737px;top:53px" width="10.5" height="10.5" viewBox="0 0 12 12"><path d="M2 2v9M2 2h7M5 5v6M8 4l2 3-3 4" transform="translate(1,1)" stroke="#ffffff" stroke-width="1.6" fill="none"/><path d="M2 2v9M2 2h7M5 5v6M8 4l2 3-3 4" stroke="#828282" stroke-width="1.6" fill="none"/></svg>
<svg class="i" style="left:750px;top:53px" width="10.5" height="10.5" viewBox="0 0 12 12"><path d="M2 2v9M2 2h7M5 5v6M8 4l2 3-3 4" transform="translate(1,1)" stroke="#ffffff" stroke-width="1.6" fill="none"/><path d="M2 2v9M2 2h7M5 5v6M8 4l2 3-3 4" stroke="#828282" stroke-width="1.6" fill="none"/></svg>
<svg class="i" style="left:762px;top:60px" width="5" height="3" viewBox="0 0 5 3"><path d="M0 0h5l-2.5 3z" fill="#000"/></svg>
<div class="tbar" style="left:771px;top:50px;width:126px;height:16px"></div>
<div class="grip" style="left:773px;top:52px;height:12px"></div>
<div class="grip" style="left:773px;top:52px;height:12px"></div>
<div class="a" style="left:776px;top:52px;width:34px;height:13px;background:#fff;border:1px solid;border-color:#404040 #fff #fff #404040"></div>
<div class="t" style="left:778px;top:54px;font-size:8.9px;transform:scaleX(0.885);width:20.3px;text-align:right;font-size:9.38px">0.5</div>
<div class="a" style="left:797px;top:53px;width:12px;height:6px;background:#d4d0c8;border:1px solid;border-color:#fff #404040 #404040 #fff"></div>
<div class="a" style="left:797px;top:59px;width:12px;height:5px;background:#d4d0c8;border:1px solid;border-color:#fff #404040 #404040 #fff"></div>
<svg class="i" style="left:801px;top:55px" width="5" height="3" viewBox="0 0 5 3"><path d="M0 3h5l-2.5-3z" fill="#000"/></svg>
<svg class="i" style="left:801px;top:60px" width="5" height="3" viewBox="0 0 5 3"><path d="M0 0h5l-2.5 3z" fill="#000"/></svg>
<svg class="i" style="left:813px;top:53px" width="10.5" height="10.5" viewBox="0 0 12 12"><path d="M1 9h10M6 2v6" stroke="#2020b0" stroke-width="1"/><path d="M2 4 L6 9 L10 4" stroke="#d02020" stroke-width="1.5" fill="none"/><circle cx="3" cy="9" r="1.3" fill="#d02020"/><circle cx="9" cy="9" r="1.3" fill="#d02020"/></svg>
<div class="a" style="left:824px;top:52px;width:37px;height:13px;background:#fff;border:1px solid;border-color:#404040 #fff #fff #404040"></div>
<div class="t" style="left:826px;top:54px;font-size:8.9px;transform:scaleX(0.885);width:23.7px;text-align:right;font-size:9.38px">0.125</div>
<div class="a" style="left:848px;top:53px;width:12px;height:6px;background:#d4d0c8;border:1px solid;border-color:#fff #404040 #404040 #fff"></div>
<div class="a" style="left:848px;top:59px;width:12px;height:5px;background:#d4d0c8;border:1px solid;border-color:#fff #404040 #404040 #fff"></div>
<svg class="i" style="left:852px;top:55px" width="5" height="3" viewBox="0 0 5 3"><path d="M0 3h5l-2.5-3z" fill="#000"/></svg>
<svg class="i" style="left:852px;top:60px" width="5" height="3" viewBox="0 0 5 3"><path d="M0 0h5l-2.5 3z" fill="#000"/></svg>
<svg class="i" style="left:866px;top:53px" width="10.5" height="10.5" viewBox="0 0 12 12"><path d="M1 3h10M1 5 L11 11M11 5 L1 11" stroke="#d02020" stroke-width="1.3"/><path d="M3 8h6" stroke="#2020a0"/></svg>
<svg class="i" style="left:878px;top:53px" width="10.5" height="10.5" viewBox="0 0 12 12"><text x="0" y="11" font-size="7" font-weight="bold" fill="#2020a0" font-family="Liberation Sans">1/8</text><rect x="6" y="0.5" width="4" height="4" fill="none" stroke="#2020a0"/></svg>
<svg class="i" style="left:890px;top:60px" width="5" height="3" viewBox="0 0 5 3"><path d="M0 0h5l-2.5 3z" fill="#000"/></svg>
<div class="a" style="left:0px;top:65px;width:178px;height:14px;background:#808080"></div>
<div class="t" style="left:3px;top:67px;font-size:8.9px;transform:scaleX(0.885);color:#c4c4c4;font-size:9.04px">Menübaum</div>
<div class="a" style="left:1px;top:81px;width:177px;height:610px;background:#fff;border-style:solid;border-width:1px 1px 2px 2px;border-color:#a0a0a0 #404040 #8a8a8a #505050"></div>
<div class="tree">
<div class="a" style="left:8px;top:89px;width:7px;height:1px;background:#c8c8c8"></div>
<svg class="i" style="left:15px;top:84px" width="10" height="10" viewBox="0 0 10 10"><rect x="1.5" y="1.5" width="7" height="7" fill="none" stroke="#707070" stroke-width="1.2"/><path d="M3 7l4-4" stroke="#707070"/></svg>
<div class="t" style="left:27px;top:84.7px;font-size:8.9px;transform:scaleX(0.885);">Projekt</div>
<div class="a" style="left:8px;top:100px;width:7px;height:1px;background:#c8c8c8"></div>
<svg class="i" style="left:15px;top:95px" width="10" height="10" viewBox="0 0 10 10"><path d="M0 3.5h9M0 6.5h9M3 0v10M6 0v10" stroke="#808080"/></svg>
<div class="t" style="left:27px;top:95.94px;font-size:8.9px;transform:scaleX(0.885);">Linienraster und Geschosse</div>
<div class="a" style="left:8px;top:111px;width:7px;height:1px;background:#c8c8c8"></div>
<svg class="i" style="left:15px;top:106px" width="10" height="10" viewBox="0 0 10 10"><rect x="0.5" y="3" width="9" height="6.5" fill="#707070"/><path d="M3 3v-2h4v2" stroke="#707070" fill="none" stroke-width="1.3"/></svg>
<div class="t" style="left:27px;top:107.18px;font-size:8.9px;transform:scaleX(0.885);">BIM-Werkzeugkasten</div>
<div class="a" style="left:8px;top:123px;width:7px;height:1px;background:#c8c8c8"></div>
<svg class="i" style="left:15px;top:118px" width="10" height="10" viewBox="0 0 10 10"><path d="M1.5 9v-7h7v7M1 2.5h8" stroke="#808080" stroke-width="1.2" fill="none"/><path d="M4 1h2" stroke="#808080"/></svg>
<div class="t" style="left:27px;top:118.42px;font-size:8.9px;transform:scaleX(0.885);">Struktur</div>
<div class="a" style="left:8px;top:134px;width:7px;height:1px;background:#c8c8c8"></div>
<svg class="i" style="left:15px;top:129px" width="10" height="10" viewBox="0 0 10 10"><path d="M2 0v7M0.5 8.5h9M3 6l5-3v5" stroke="#707070" stroke-width="1.3" fill="none"/></svg>
<div class="t" style="left:27px;top:129.66px;font-size:8.9px;transform:scaleX(0.885);">Belastung</div>
<div class="a" style="left:8px;top:145px;width:7px;height:1px;background:#c8c8c8"></div>
<svg class="i" style="left:15px;top:140px" width="10" height="10" viewBox="0 0 10 10"><path d="M2 1v7M0.5 8.5h9M5 6h4M7 1a1.3 1.3 0 1 0 .1 0" stroke="#707070" stroke-width="1.2" fill="none"/></svg>
<div class="t" style="left:27px;top:140.89999999999998px;font-size:8.9px;transform:scaleX(0.885);">Lastfälle und LF-Kombinationen</div>
<div class="a" style="left:20px;top:156px;width:6px;height:1px;background:#c8c8c8"></div>
<svg class="i" style="left:26px;top:151px" width="10" height="10" viewBox="0 0 10 10"><path d="M2 1v8M0 9h3" stroke="#707070" stroke-width="1.3"/><rect x="3" y="1" width="6" height="5" fill="#b0b0b0" stroke="#707070"/></svg>
<div class="t" style="left:38px;top:152.14px;font-size:8.9px;transform:scaleX(0.885);">Lastfälle</div>
<div class="a" style="left:20px;top:168px;width:6px;height:1px;background:#c8c8c8"></div>
<svg class="i" style="left:26px;top:163px" width="10" height="10" viewBox="0 0 10 10"><path d="M2 1v8M0 9h3" stroke="#707070" stroke-width="1.3"/><path d="M5 3h3M7 1v4" stroke="#707070"/></svg>
<div class="t" style="left:38px;top:163.38px;font-size:8.9px;transform:scaleX(0.885);">Lastgruppen</div>
<div class="a" style="left:20px;top:179px;width:6px;height:1px;background:#c8c8c8"></div>
<svg class="i" style="left:26px;top:174px" width="10" height="10" viewBox="0 0 10 10"><path d="M2 1v8M0 9h3M5 1v4" stroke="#707070" stroke-width="1.3"/><path d="M6 7l2-2 2 2-2 2z" fill="#707070"/><path d="M8 1v3" stroke="#707070"/></svg>
<div class="t" style="left:38px;top:174.62px;font-size:8.9px;transform:scaleX(0.885);">LF-Kombinationen</div>
<div class="a" style="left:20px;top:190px;width:6px;height:1px;background:#c8c8c8"></div>
<svg class="i" style="left:26px;top:185px" width="10" height="10" viewBox="0 0 10 10"><path d="M2 1v8M0 9h3M5 1v4" stroke="#707070" stroke-width="1.3"/><path d="M6 7l2-2 2 2-2 2z" fill="#707070"/><path d="M8 1v3" stroke="#707070"/></svg>
<div class="t" style="left:38px;top:185.85999999999999px;font-size:8.9px;transform:scaleX(0.885);">Nichtlineare LF-Kombinationen</div>
<div class="a" style="left:20px;top:201px;width:6px;height:1px;background:#c8c8c8"></div>
<svg class="i" style="left:26px;top:196px" width="10" height="10" viewBox="0 0 10 10"><path d="M2 1v8M0 9h3M5 1v4" stroke="#707070" stroke-width="1.3"/><path d="M6 7l2-2 2 2-2 2z" fill="#707070"/><path d="M8 1v3" stroke="#707070"/></svg>
<div class="t" style="left:38px;top:197.1px;font-size:8.9px;transform:scaleX(0.885);">Stabilitäts-LFK</div>
<div class="a" style="left:20px;top:213px;width:6px;height:1px;background:#c8c8c8"></div>
<svg class="i" style="left:26px;top:208px" width="10" height="10" viewBox="0 0 10 10"><path d="M2 1v8M0 9h3M5 1v4" stroke="#707070" stroke-width="1.3"/><path d="M6 7l2-2 2 2-2 2z" fill="#707070"/><path d="M8 1v3" stroke="#707070"/></svg>
<div class="t" style="left:38px;top:208.33999999999997px;font-size:8.9px;transform:scaleX(0.885);">Stahlbeton-LFK</div>
<div class="a" style="left:20px;top:224px;width:6px;height:1px;background:#c8c8c8"></div>
<svg class="i" style="left:26px;top:219px" width="10" height="10" viewBox="0 0 10 10"><path d="M0.5 9h9M1 5l3 2 5-3" stroke="#606060" stroke-width="1.3" fill="none"/><rect x="3" y="0.5" width="6" height="5" fill="#c0c0c0" stroke="#808080"/></svg>
<div class="t" style="left:38px;top:219.57999999999998px;font-size:8.9px;transform:scaleX(0.885);">Ergebnisklassen</div>
<div class="a" style="left:8px;top:235px;width:7px;height:1px;background:#c8c8c8"></div>
<svg class="i" style="left:15px;top:230px" width="10" height="10" viewBox="0 0 10 10"><path d="M1 10v-9h7M3 3v7M3 4h4" stroke="#606060" stroke-width="1.4" fill="none"/></svg>
<div class="t" style="left:27px;top:230.82px;font-size:8.9px;transform:scaleX(0.885);">Absenzen</div>
<div class="a" style="left:8px;top:246px;width:7px;height:1px;background:#c8c8c8"></div>
<svg class="i" style="left:15px;top:241px" width="10" height="10" viewBox="0 0 10 10"><rect x="1" y="0.5" width="7" height="9" fill="#e0e0e0" stroke="#707070"/><path d="M2 3h5M3 5h3M3 7h3" stroke="#808080"/></svg>
<div class="t" style="left:27px;top:242.06px;font-size:8.9px;transform:scaleX(0.885);">Berechnung, FE-Netz</div>
<div class="a" style="left:8px;top:258px;width:7px;height:1px;background:#c8c8c8"></div>
<svg class="i" style="left:15px;top:253px" width="10" height="10" viewBox="0 0 10 10"><path d="M0 1 Q5 12 10 1" stroke="#606060" stroke-width="1.6" fill="none"/></svg>
<div class="t" style="left:27px;top:253.3px;font-size:8.9px;transform:scaleX(0.885);">Ergebnisse</div>
<div class="a" style="left:8px;top:269px;width:7px;height:1px;background:#c8c8c8"></div>
<svg class="i" style="left:15px;top:264px" width="10" height="10" viewBox="0 0 10 10"><path d="M2 0v10M2 3h6M2 6h6M5 3v3" stroke="#707070" stroke-width="1.4"/></svg>
<div class="t" style="left:27px;top:264.54px;font-size:8.9px;transform:scaleX(0.885);">Stahl</div>
<div class="a" style="left:8px;top:280px;width:7px;height:1px;background:#c8c8c8"></div>
<svg class="i" style="left:15px;top:275px" width="10" height="10" viewBox="0 0 10 10"><path d="M0 1h9v3h-3v6h-3v-6h-3z" fill="#707070"/></svg>
<div class="t" style="left:27px;top:275.78000000000003px;font-size:8.9px;transform:scaleX(0.885);">Beton</div>
<div class="a" style="left:8px;top:291px;width:7px;height:1px;background:#c8c8c8"></div>
<svg class="i" style="left:15px;top:286px" width="10" height="10" viewBox="0 0 10 10"><path d="M1 2h4l1 1 1-1h2v7h-8z" fill="none" stroke="#707070" stroke-width="1.2"/><path d="M5 3v6" stroke="#707070"/></svg>
<div class="t" style="left:27px;top:287.02px;font-size:8.9px;transform:scaleX(0.885);">Dokument</div>
<div class="a" style="left:8px;top:303px;width:7px;height:1px;background:#c8c8c8"></div>
<svg class="i" style="left:15px;top:298px" width="10" height="10" viewBox="0 0 10 10"><path d="M1 9 L1 1 L5 6 L9 1" stroke="#707070" stroke-width="1.6" fill="none"/><path d="M0 9.5h9" stroke="#808080"/></svg>
<div class="t" style="left:27px;top:298.26px;font-size:8.9px;transform:scaleX(0.885);">Zeichnungswerkzeuge</div>
<div class="a" style="left:8px;top:314px;width:7px;height:1px;background:#c8c8c8"></div>
<svg class="i" style="left:15px;top:309px" width="10" height="10" viewBox="0 0 10 10"><rect x="1" y="1" width="7" height="9" fill="#707070"/><path d="M8 1l1 1v8" stroke="#a0a0a0"/></svg>
<div class="t" style="left:27px;top:309.5px;font-size:8.9px;transform:scaleX(0.885);">Bibliotheken</div>
<div class="a" style="left:8px;top:325px;width:7px;height:1px;background:#c8c8c8"></div>
<svg class="i" style="left:15px;top:320px" width="10" height="10" viewBox="0 0 10 10"><path d="M1 9 L8 2M5 1 L9 5M2 2l7 8" stroke="#505050" stroke-width="1.5"/></svg>
<div class="t" style="left:27px;top:320.73999999999995px;font-size:8.9px;transform:scaleX(0.885);">Werkzeuge</div>
<div class="a" style="left:8px;top:84px;width:1px;height:241px;background:#c8c8c8"></div>
<div class="a" style="left:20px;top:150px;width:1px;height:74px;background:#c8c8c8"></div>
<div class="a" style="left:5px;top:142px;width:7px;height:7px;background:#fff;border:1px solid #b8b8b8"></div>
<div class="a" style="left:7px;top:145px;width:3px;height:1px;background:#101010"></div>
<div class="a" style="left:5px;top:232px;width:7px;height:7px;background:#fff;border:1px solid #b8b8b8"></div>
<div class="a" style="left:7px;top:235px;width:3px;height:1px;background:#101010"></div>
<div class="a" style="left:8px;top:234px;width:1px;height:3px;background:#101010"></div>
<div class="a" style="left:5px;top:243px;width:7px;height:7px;background:#fff;border:1px solid #b8b8b8"></div>
<div class="a" style="left:7px;top:246px;width:3px;height:1px;background:#101010"></div>
<div class="a" style="left:8px;top:245px;width:1px;height:3px;background:#101010"></div>
<div class="a" style="left:5px;top:300px;width:7px;height:7px;background:#fff;border:1px solid #b8b8b8"></div>
<div class="a" style="left:7px;top:303px;width:3px;height:1px;background:#101010"></div>
<div class="a" style="left:8px;top:302px;width:1px;height:3px;background:#101010"></div>
<div class="a" style="left:5px;top:311px;width:7px;height:7px;background:#fff;border:1px solid #b8b8b8"></div>
<div class="a" style="left:7px;top:314px;width:3px;height:1px;background:#101010"></div>
<div class="a" style="left:8px;top:313px;width:1px;height:3px;background:#101010"></div>
<div class="a" style="left:5px;top:322px;width:7px;height:7px;background:#fff;border:1px solid #b8b8b8"></div>
<div class="a" style="left:7px;top:325px;width:3px;height:1px;background:#101010"></div>
<div class="a" style="left:8px;top:324px;width:1px;height:3px;background:#101010"></div>
</div>
<div class="a" style="left:3px;top:688px;width:18px;height:15px;background:#d4d0c8;border-style:solid;border-width:0 1px 1px 1px;border-color:#fff #404040 #404040 #fff"></div>
<svg class="i" style="left:7px;top:691px" width="10" height="10" viewBox="0 0 10 10"><rect x="0" y="0" width="3" height="3" fill="none" stroke="#000" stroke-width="0.8"/><rect x="4" y="2" width="5" height="4" fill="#e02020"/><rect x="4" y="5" width="5" height="4" fill="#40c8d0"/><path d="M1.5 3v4h2" stroke="#000" stroke-width="0.8" fill="none"/></svg>
<div class="a" style="left:141px;top:71px;width:40px;height:98px;background:#d4d0c8;border:1px solid;border-color:#d4d0c8 #404040 #404040 #d4d0c8;box-shadow:inset 1px 1px #fff"></div>
<div class="a" style="left:143px;top:73px;width:38px;height:12px;background:#0a246a"></div>
<div class="t" style="left:144px;top:74px;font-size:8.9px;transform:scaleX(0.885);color:#fff;font-weight:bold;font-size:8.59px">Ansicht</div>
<svg class="i" style="left:173px;top:76px" width="6" height="5" viewBox="0 0 6 5"><path d="M0 1h6l-3 3z" fill="#fff"/></svg>
<svg class="i" style="left:147px;top:87px" width="12" height="12" viewBox="0 0 12 12"><path d="M5 0v6" stroke="#2020d0" stroke-width="1.2"/><path d="M2 1l3 5" stroke="#d02020" stroke-width="1.2"/><ellipse cx="5.5" cy="8" rx="4" ry="2.5" fill="#30c8c0" stroke="#404040"/><path d="M3 8h5" stroke="#fff"/></svg>
<svg class="i" style="left:159px;top:87px" width="12" height="12" viewBox="0 0 12 12"><path d="M5 0v6" stroke="#2020d0" stroke-width="1.2"/><path d="M2 1l3 5" stroke="#d02020" stroke-width="1.2"/><ellipse cx="5.5" cy="8" rx="4" ry="2.5" fill="#30c8c0" stroke="#404040"/><path d="M3 8h5" stroke="#fff"/></svg>
<svg class="i" style="left:171px;top:87px" width="12" height="12" viewBox="0 0 12 12"><path d="M5 0v6" stroke="#2020d0" stroke-width="1.2"/><path d="M2 1l3 5" stroke="#d02020" stroke-width="1.2"/><ellipse cx="5.5" cy="8" rx="4" ry="2.5" fill="#30c8c0" stroke="#404040"/><path d="M3 8h5" stroke="#fff"/></svg>
<svg class="i" style="left:147px;top:104px" width="12" height="12" viewBox="0 0 12 12"><path d="M4 1v8" stroke="#2020c0" stroke-width="1.5"/><path d="M4 9h7" stroke="#d02020" stroke-width="1.5"/><path d="M1 10l3-3" stroke="#20a020" stroke-width="1.5"/><path d="M9 7l2 2-2 2" fill="#d02020"/></svg>
<svg class="i" style="left:159px;top:103px" width="12" height="12" viewBox="0 0 12 12"><circle cx="5" cy="5" r="3.5" fill="#fff" stroke="#000" stroke-width="1.2"/><path d="M2.5 4a2.5 2.5 0 0 1 5 0" stroke="#40c0c0" stroke-width="1.5" fill="none"/><path d="M7.5 7.5l3 3" stroke="#000" stroke-width="1.8"/><path d="M1 10h4" stroke="#000" stroke-width="1.3"/><path d="M3 8v4" stroke="#000" stroke-width="1.3"/></svg>
<svg class="i" style="left:171px;top:103px" width="12" height="12" viewBox="0 0 12 12"><circle cx="5" cy="5" r="3.5" fill="#fff" stroke="#000" stroke-width="1.2"/><path d="M2.5 4a2.5 2.5 0 0 1 5 0" stroke="#40c0c0" stroke-width="1.5" fill="none"/><path d="M7.5 7.5l3 3" stroke="#000" stroke-width="1.8"/><path d="M1 10h4" stroke="#000" stroke-width="1.3"/></svg>
<svg class="i" style="left:147px;top:119px" width="12" height="12" viewBox="0 0 12 12"><circle cx="5" cy="5" r="3.5" fill="#fff" stroke="#000" stroke-width="1.2"/><path d="M2.5 4a2.5 2.5 0 0 1 5 0" stroke="#40c0c0" stroke-width="1.5" fill="none"/><path d="M7.5 7.5l3 3" stroke="#000" stroke-width="1.8"/><path d="M0 10h5M0 10l1.5-1.5M0 10l1.5 1.5" stroke="#000" stroke-width="1"/></svg>
<svg class="i" style="left:159px;top:119px" width="12" height="12" viewBox="0 0 12 12"><circle cx="5" cy="5" r="3.5" fill="none" stroke="#a0a0a0" stroke-width="1.2"/><path d="M3 9v3M7 9l3 3" stroke="#a0a0a0" stroke-width="1.2"/></svg>
<svg class="i" style="left:171px;top:119px" width="10" height="12" viewBox="0 0 10 12"><rect x="1" y="4" width="8" height="7" fill="#f0f040" stroke="#404000"/><path d="M3 1l3 3" stroke="#d02020" stroke-width="1.3"/><path d="M6 1v3" stroke="#20a020"/></svg>
<div class="a" style="left:143px;top:134px;width:36px;height:1px;background:#808080"></div>
<div class="a" style="left:143px;top:135px;width:36px;height:1px;background:#fff"></div>
<svg class="i" style="left:146px;top:138px" width="12" height="12" viewBox="0 0 12 12"><rect x="1" y="4" width="9" height="6" fill="#d04040" stroke="#202060"/><path d="M2 6h7" stroke="#fff"/><circle cx="8" cy="3.5" r="2.5" fill="none" stroke="#2020a0"/></svg>
<svg class="i" style="left:159px;top:138px" width="12" height="12" viewBox="0 0 12 12"><rect x="1" y="4" width="9" height="6" fill="none" stroke="#a0a0a0"/><path d="M2 6h7M4 2h4v2" stroke="#a0a0a0" fill="none"/></svg>
<div class="a" style="left:173px;top:137px;width:2px;height:12px;border-left:1px solid #808080;border-right:1px solid #fff"></div>
<div class="a" style="left:143px;top:152px;width:36px;height:1px;background:#808080"></div>
<div class="a" style="left:143px;top:153px;width:36px;height:1px;background:#fff"></div>
<svg class="i" style="left:146px;top:155px" width="12" height="12" viewBox="0 0 12 12"><path d="M1 3l3-2h7v8l-3 2h-7z" fill="#2030c0" stroke="#000" stroke-width="0.8"/><path d="M3 4h5v6h-5z" fill="#fff"/><path d="M4 9l3-4" stroke="#d02020"/></svg>
<div class="a" style="left:178px;top:65px;width:776px;height:585px;background:#d4d0c8;border:1px solid;border-color:#d4d0c8 #404040 #404040 #d4d0c8;box-shadow:inset 1px 1px #fff,inset -1px -1px #808080"></div>
<div class="a" style="left:181px;top:68px;width:770px;height:14px;background:linear-gradient(90deg,#0a246a,#a6caf0)"></div>
<svg class="i" style="left:184px;top:69px" width="11" height="12" viewBox="0 0 11 12"><rect x="0" y="0" width="9" height="12" fill="#f0f0f0"/><path d="M0 12V0H9" stroke="#fff" fill="none"/><path d="M3 8v-3q1.5-2 3 0" stroke="#505050" stroke-width="1.2" fill="none"/></svg>
<div class="t" style="left:197px;top:70px;font-size:8.9px;transform:scaleX(0.885);color:#fff;font-weight:bold;font-size:9.49px">Zeichnungsgalerie</div>
<div class="a" style="left:912px;top:69px;width:13px;height:12px;background:#d4d0c8;border:1px solid;border-color:#fff #404040 #404040 #fff;box-shadow:inset -1px -1px #808080"></div>
<div class="a" style="left:925px;top:69px;width:13px;height:12px;background:#d4d0c8;border:1px solid;border-color:#fff #404040 #404040 #fff;box-shadow:inset -1px -1px #808080"></div>
<div class="a" style="left:939px;top:69px;width:13px;height:12px;background:#d4d0c8;border:1px solid;border-color:#fff #404040 #404040 #fff;box-shadow:inset -1px -1px #808080"></div>
<div class="a" style="left:915px;top:77px;width:6px;height:1px;background:#505050"></div>
<div class="a" style="left:927px;top:71px;width:8px;height:7px;border:1px solid #202020;border-top-width:2px"></div>
<svg class="i" style="left:941px;top:71px" width="8" height="7" viewBox="0 0 8 7"><path d="M1 0.5l6 6M7 0.5l-6 6" stroke="#000" stroke-width="1.6"/></svg>
<div class="tbar" style="left:183px;top:82px;width:106px;height:17px"></div>
<div class="grip" style="left:185px;top:84px;height:13px"></div>
<svg class="i" style="left:190px;top:86px" width="10.5" height="10.5" viewBox="0 0 12 12"><rect x="5" y="1" width="6" height="8" fill="#a0a050" stroke="#404020"/><rect x="5" y="0" width="6" height="2" fill="#2020d0"/><path d="M1 11l6-6M3 5h4v4" stroke="#1030f0" stroke-width="2.2" fill="none"/></svg>
<div class="sep" style="left:203px;top:85px;height:12px"></div>
<svg class="i" style="left:208px;top:86px" width="10.5" height="10.5" viewBox="0 0 12 12"><path d="M2 10l2-4 6-5 2 2-5 6z" fill="#404020"/><path d="M3 8l5-5" stroke="#f0e040" stroke-width="1.8"/><path d="M0 11h5" stroke="#2020a0" stroke-width="1.2"/></svg>
<svg class="i" style="left:221px;top:86px" width="10.5" height="10.5" viewBox="0 0 12 12"><rect x="1" y="2" width="5" height="8" fill="#a0a060" stroke="#404020"/><circle cx="8" cy="8" r="3.5" fill="#40b0d0" stroke="#205060"/><path d="M8 1l2 2" stroke="#2020d0" stroke-width="1.3"/></svg>
<svg class="i" style="left:234px;top:86px" width="10.5" height="10.5" viewBox="0 0 12 12"><rect x="1" y="1" width="6" height="9" fill="#c0b050" stroke="#402020"/><rect x="1" y="1" width="6" height="2" fill="#2020d0"/><path d="M6 6l5 5M11 6l-5 5" stroke="#e02020" stroke-width="1.5"/></svg>
<svg class="i" style="left:247px;top:86px" width="10.5" height="10.5" viewBox="0 0 12 12"><rect x="0.5" y="4.5" width="10" height="5" fill="#a0a0a0" stroke="#303030"/><rect x="3" y="1" width="5" height="4" fill="#fff" stroke="#303030"/><rect x="2" y="8" width="7" height="3" fill="#e0e0e0" stroke="#303030"/></svg>
<svg class="i" style="left:260px;top:86px" width="10.5" height="10.5" viewBox="0 0 12 12"><rect x="0.5" y="0.5" width="10" height="11" fill="#202020"/><rect x="2" y="2" width="3" height="3" fill="#d0c050"/><rect x="6" y="2" width="3" height="3" fill="#c06030"/><rect x="3" y="7" width="5" height="4" fill="#fff"/></svg>
<div class="sep" style="left:273px;top:85px;height:12px"></div>
<svg class="i" style="left:277px;top:86px" width="10.5" height="10.5" viewBox="0 0 12 12"><rect x="3.5" y="0.5" width="8" height="6" fill="#fff" stroke="#2020c0"/><rect x="0.5" y="4.5" width="8" height="6" fill="#fff" stroke="#2020c0"/><circle cx="6" cy="8" r="2.5" fill="#60d060" stroke="#000"/><path d="M8 10l2 2" stroke="#000" stroke-width="1.3"/></svg>
<div class="a" style="left:183px;top:99px;width:82px;height:515px;background:#d4d0c8;border:1px solid;border-color:#808080 #8c8c8c #5a5a5a #5a5a5a"></div>
<div class="a" style="left:184px;top:100px;width:80px;height:242px;background:#fff"></div>
<div class="a" style="left:184px;top:101px;width:80px;height:12px;background:#d4d0c8;border-bottom:2px solid #606060;border-right:1px solid #a0a0a0;border-top:1px solid #fff"></div>
<div class="t" style="left:187px;top:102px;font-size:8.9px;transform:scaleX(0.885);font-size:9.1px">Name</div>
<div class="a" style="left:185px;top:114px;width:28px;height:11px;background:#dcdad4"></div>
<div class="t" style="left:187px;top:114px;font-size:8.9px;transform:scaleX(0.885);font-size:8.8px">Plott.1</div>
<div class="t" style="left:187px;top:125px;font-size:8.9px;transform:scaleX(0.885);font-size:8.8px">Plott.2</div>
<div class="t" style="left:187px;top:136px;font-size:8.9px;transform:scaleX(0.885);font-size:8.8px">Kopie Plott.1</div>
<div class="a" style="left:184px;top:342px;width:80px;height:13px;background:#ecebe8"></div>
<div class="a" style="left:184px;top:342px;width:11px;height:13px;background:#d4d0c8;border:1px solid;border-color:#fff #404040 #404040 #fff;box-shadow:inset -1px -1px #808080"></div>
<svg class="i" style="left:187px;top:345px" width="4" height="7" viewBox="0 0 4 7"><path d="M4 0v7L0 3.5z" fill="#000"/></svg>
<div class="a" style="left:195px;top:342px;width:39px;height:13px;background:#d4d0c8;border:1px solid;border-color:#fff #404040 #404040 #fff;box-shadow:inset -1px -1px #808080"></div>
<div class="a" style="left:252px;top:342px;width:12px;height:13px;background:#d4d0c8;border:1px solid;border-color:#fff #404040 #404040 #fff;box-shadow:inset -1px -1px #808080"></div>
<svg class="i" style="left:256px;top:345px" width="4" height="7" viewBox="0 0 4 7"><path d="M0 0v7L4 3.5z" fill="#000"/></svg>
<div class="a" style="left:184px;top:356px;width:80px;height:1px;background:#fff"></div>
<div class="a" style="left:184px;top:358px;width:44px;height:14px;background:#808080;border:1px solid;border-color:#606060 #404040 #404040 #606060"></div>
<div class="t" style="left:187px;top:360px;font-size:8.9px;transform:scaleX(0.885);color:#b8b8b8;font-size:9.1px">Name</div>
<div class="a" style="left:228px;top:358px;width:36px;height:14px;background:#fff"></div>
<div class="t" style="left:230px;top:360px;font-size:8.9px;transform:scaleX(0.885);font-size:8.8px">Plott.1</div>
<div class="a" style="left:265px;top:99px;width:686px;height:515px;background:#fff;border-left:1px solid #a0a0a0"></div>
<div class="t" style="left:185px;top:616px;font-size:8.9px;transform:scaleX(0.885);font-size:9.04px">Bereit</div>
<div class="btn" style="left:182px;top:628px;width:60px;height:19px"></div>
<div class="t" style="left:182px;top:633px;font-size:8.9px;transform:scaleX(0.885);width:67.8px;text-align:center;font-size:9.38px"><u>N</u>eu</div>
<div class="btn" style="left:246px;top:628px;width:60px;height:19px"></div>
<div class="t" style="left:246px;top:633px;font-size:8.9px;transform:scaleX(0.885);width:67.8px;text-align:center;font-size:9.38px"><u>B</u>earbeiten</div>
<div class="btn" style="left:310px;top:628px;width:60px;height:19px"></div>
<div class="t" style="left:310px;top:633px;font-size:8.9px;transform:scaleX(0.885);width:67.8px;text-align:center;font-size:9.38px"><u>L</u>öschen</div>
<div class="btn" style="left:885px;top:628px;width:61px;height:19px"></div>
<div class="t" style="left:885px;top:633px;font-size:8.9px;transform:scaleX(0.885);width:68.9px;text-align:center;font-size:9.38px">Sc<u>h</u>ließen</div>
<div class="a" style="left:892px;top:615px;width:17px;height:12px;border:1px solid;border-color:#808080 #fff #fff #808080;overflow:hidden"></div>
<div class="t" style="left:894px;top:616px;font-size:8.9px;transform:scaleX(0.885);color:#a4a4a4;font-size:8.36px">CAP</div>
<div class="a" style="left:910px;top:615px;width:21px;height:12px;border:1px solid;border-color:#808080 #fff #fff #808080"></div>
<div class="t" style="left:911px;top:616px;font-size:8.9px;transform:scaleX(0.885);color:#202020;font-size:8.36px">NUM</div>
<div class="a" style="left:932px;top:615px;width:19px;height:12px;border:1px solid;border-color:#808080 #fff #fff #808080;overflow:hidden"></div>
<div class="t" style="left:933px;top:616px;font-size:8.9px;transform:scaleX(0.885);color:#a4a4a4;font-size:8.36px">SCRL</div>
<svg class="i" style="left:944px;top:639px" width="8" height="8" viewBox="0 0 8 8"><path d="M7 1L1 7M7 4L4 7" stroke="#808080"/><path d="M7 2L2 7M7 5L5 7" stroke="#fff"/></svg>
<svg class="i" style="left:266px;top:99px" width="685" height="515" viewBox="266 99 685 515"><rect x="305.5" y="116.5" width="636" height="474" fill="none" stroke="#e6e6e6"/><rect x="311.5" y="121.5" width="624" height="467" fill="none" stroke="#ececec"/><rect x="317.2" y="128.3" width="612" height="456" fill="none" stroke="#606060" stroke-width="1.5"/><rect x="321.5" y="132.5" width="332" height="257" fill="none" stroke="#f0f0f0"/><rect x="653.5" y="129.5" width="257" height="178" fill="none" stroke="#f0f0f0"/><rect x="706.5" y="312.5" width="166" height="111" fill="none" stroke="#f0f0f0"/><rect x="442.5" y="399.5" width="208" height="176" fill="none" stroke="#f0f0f0"/><rect x="342" y="142.5" width="288" height="229" fill="#fff" stroke="#c4c48c" stroke-width="1.6"/><polygon points="398.4,197 388.4,190.3 395.7,184.9 403.9,194.4 497.3,194.4 608.4,225.5 545.5,343.3 485,272 376.8,315" fill="none" stroke="#404040" stroke-width="0.9"/><polygon points="399.8,196.8 497.2,196.7 605.9,227.1 545.6,340 485.6,269.5 379.6,310.9" fill="none" stroke="#b8b888" stroke-width="1.4"/><polygon points="404,203.5 496.8,203.5 598.5,232 546,330 487.5,262 388,298.5" fill="none" stroke="#4a4a30" stroke-width="1.6"/><path d="M466 180.5H578" stroke="#303030" stroke-width="0.8" stroke-dasharray="5 1.5 1 1.5" fill="none"/><path d="M466 183.5H578" stroke="#303030" stroke-width="0.8" stroke-dasharray="5 1.5 1 1.5" fill="none"/><path d="M466 186.5H578" stroke="#303030" stroke-width="0.8" stroke-dasharray="5 1.5 1 1.5" fill="none"/><path d="M468 304.5H580" stroke="#303030" stroke-width="0.8" stroke-dasharray="5 1.5 1 1.5" fill="none"/><path d="M468 307.5H580" stroke="#303030" stroke-width="0.8" stroke-dasharray="5 1.5 1 1.5" fill="none"/><path d="M468 310.5H580" stroke="#303030" stroke-width="0.8" stroke-dasharray="5 1.5 1 1.5" fill="none"/><path d="M459.5 192V300" stroke="#303030" stroke-width="0.8" stroke-dasharray="5 1.5 1 1.5" fill="none"/><path d="M463.5 192V300" stroke="#303030" stroke-width="0.8" stroke-dasharray="5 1.5 1 1.5" fill="none"/><path d="M467.5 192V300" stroke="#303030" stroke-width="0.8" stroke-dasharray="5 1.5 1 1.5" fill="none"/><path d="M578.5 194V300" stroke="#303030" stroke-width="0.8" stroke-dasharray="5 1.5 1 1.5" fill="none"/><path d="M582.5 194V300" stroke="#303030" stroke-width="0.8" stroke-dasharray="5 1.5 1 1.5" fill="none"/><path d="M586.5 194V300" stroke="#303030" stroke-width="0.8" stroke-dasharray="5 1.5 1 1.5" fill="none"/><polygon points="462,158 481,177 462,196 443,177" fill="#fff" stroke="#303030" stroke-width="0.7"/><polygon points="462,165 474,177 462,189 450,177" fill="none" stroke="#505050" stroke-width="0.6"/><circle cx="462" cy="177" r="6" fill="none" stroke="#202020" stroke-width="1.3" stroke-dasharray="2.5 1.2"/><path d="M458 181L466 173M460 182L467 175" stroke="#30d030" stroke-width="1.8"/><path d="M438 173L458 153M440 171l3 3M456 155l3 3" stroke="#303030" stroke-width="0.7"/><rect x="447.5" y="161.5" width="3" height="1.6" fill="#202020" transform="rotate(-45 448.5 162.5)"/><polygon points="580,163 599,182 580,201 561,182" fill="#fff" stroke="#303030" stroke-width="0.7"/><polygon points="580,170 592,182 580,194 568,182" fill="none" stroke="#505050" stroke-width="0.6"/><circle cx="580" cy="182" r="6" fill="none" stroke="#202020" stroke-width="1.3" stroke-dasharray="2.5 1.2"/><path d="M576 186L584 178M578 187L585 180" stroke="#30d030" stroke-width="1.8"/><path d="M556 178L576 158M558 176l3 3M574 160l3 3" stroke="#303030" stroke-width="0.7"/><rect x="565.5" y="166.5" width="3" height="1.6" fill="#202020" transform="rotate(-45 566.5 167.5)"/><polygon points="462,289 481,308 462,327 443,308" fill="#fff" stroke="#303030" stroke-width="0.7"/><polygon points="462,296 474,308 462,320 450,308" fill="none" stroke="#505050" stroke-width="0.6"/><circle cx="462" cy="308" r="6" fill="none" stroke="#202020" stroke-width="1.3" stroke-dasharray="2.5 1.2"/><path d="M458 312L466 304M460 313L467 306" stroke="#30d030" stroke-width="1.8"/><path d="M438 304L458 284M440 302l3 3M456 286l3 3" stroke="#303030" stroke-width="0.7"/><rect x="447.5" y="292.5" width="3" height="1.6" fill="#202020" transform="rotate(-45 448.5 293.5)"/><polygon points="584,290 603,309 584,328 565,309" fill="#fff" stroke="#303030" stroke-width="0.7"/><polygon points="584,297 596,309 584,321 572,309" fill="none" stroke="#505050" stroke-width="0.6"/><circle cx="584" cy="309" r="6" fill="none" stroke="#202020" stroke-width="1.3" stroke-dasharray="2.5 1.2"/><path d="M580 313L588 305M582 314L589 307" stroke="#30d030" stroke-width="1.8"/><path d="M560 305L580 285M562 303l3 3M578 287l3 3" stroke="#303030" stroke-width="0.7"/><rect x="569.5" y="293.5" width="3" height="1.6" fill="#202020" transform="rotate(-45 570.5 294.5)"/><path d="M462 318.5H584M462 318V350M584 318V350M462 349.5H584M515 318V345M515 344.5H545" stroke="#202020" stroke-width="0.9" fill="none"/><path d="M462 196.5V210.5H496V196.5M504 185V201M615.5 182V226M593 182H615.5M593 226H615.5M583 215H611M611 215V226M593.5 182V320M592 320H600" stroke="#202020" stroke-width="0.9" fill="none"/><path d="M462 318.5H584" stroke="#000" stroke-width="1.6"/><rect x="476.5" y="209" width="5" height="2" fill="#303030"/><rect x="522.5" y="348" width="5" height="2" fill="#303030"/><rect x="565.5" y="348" width="5" height="2" fill="#303030"/><rect x="503.5" y="192" width="5" height="2" fill="#303030"/><rect x="613.0" y="204" width="5" height="2" fill="#303030"/><rect x="595.5" y="214" width="5" height="2" fill="#303030"/><rect x="495.5" y="317" width="5" height="2" fill="#303030"/><text x="456" y="153" font-size="7" font-family="Liberation Sans" fill="#202020">F1.1</text><text x="589" y="166" font-size="7" font-family="Liberation Sans" fill="#202020">F1</text><text x="597" y="299" font-size="7" font-family="Liberation Sans" fill="#202020">F1</text><text x="441" y="322" font-size="7" font-family="Liberation Sans" fill="#202020">F1</text><text x="470" y="155" font-size="4" font-weight="bold" font-family="Liberation Sans" fill="#202020" stroke="#000" stroke-width="0.35" textLength="37.0" lengthAdjust="spacingAndGlyphs">Köcher 0.45/0.45/0.8</text><text x="594" y="171" font-size="4" font-weight="bold" font-family="Liberation Sans" fill="#202020" stroke="#000" stroke-width="0.35" textLength="37.0" lengthAdjust="spacingAndGlyphs">Köcher 0.45/0.45/0.8</text><text x="609" y="177" font-size="4" font-weight="bold" font-family="Liberation Sans" fill="#202020" stroke="#000" stroke-width="0.35" textLength="9.2" lengthAdjust="spacingAndGlyphs">m/f/g</text><text x="597" y="287" font-size="4" font-weight="bold" font-family="Liberation Sans" fill="#202020" stroke="#000" stroke-width="0.35" textLength="37.0" lengthAdjust="spacingAndGlyphs">Köcher 0.45/0.45/0.8</text><text x="610" y="294" font-size="4" font-weight="bold" font-family="Liberation Sans" fill="#202020" stroke="#000" stroke-width="0.35" textLength="9.2" lengthAdjust="spacingAndGlyphs">m/f/g</text><text x="420" y="328" font-size="4" font-weight="bold" font-family="Liberation Sans" fill="#202020" stroke="#000" stroke-width="0.35" textLength="37.0" lengthAdjust="spacingAndGlyphs">Köcher 0.45/0.45/0.8</text><text x="433" y="333" font-size="4" font-weight="bold" font-family="Liberation Sans" fill="#202020" stroke="#000" stroke-width="0.35" textLength="9.2" lengthAdjust="spacingAndGlyphs">m/f/g</text><text x="457" y="333" font-size="4" font-weight="bold" font-family="Liberation Sans" fill="#202020" stroke="#000" stroke-width="0.35" textLength="7.4" lengthAdjust="spacingAndGlyphs">0.50</text><text x="579" y="333" font-size="4" font-weight="bold" font-family="Liberation Sans" fill="#202020" stroke="#000" stroke-width="0.35" textLength="7.4" lengthAdjust="spacingAndGlyphs">0.35</text><text x="479" y="226" font-size="5" font-family="Liberation Sans" fill="#202020" textLength="39" lengthAdjust="spacingAndGlyphs">Köcher nach schalen!</text><text x="482" y="234" font-size="5" font-family="Liberation Sans" fill="#202020" textLength="86" lengthAdjust="spacingAndGlyphs">OK Fundamente ~ 0.53m von OK Boden</text><text x="467" y="242" font-size="5" font-family="Liberation Sans" fill="#202020" textLength="128" lengthAdjust="spacingAndGlyphs">Lage der Fundamente nach Angabe der Bauleitung vor Ort!</text><polygon points="663.3,221 821.5,274 821.5,292.5 663.3,239.5" fill="#c9c8be"/><polygon points="821.5,274 902.3,213.3 902.3,231.8 821.5,292.5" fill="#dcdbcb"/><polygon points="663.3,221 742.5,159.4 902.3,213.3 821.5,274" fill="#e1e0c6"/><path d="M742.5 159.4V177.9L663.3 239.5M742.5 177.9L902.3 231.8" stroke="#a8a878" stroke-width="0.7" fill="none"/><polygon points="663.3,221 742.5,159.4 902.3,213.3 821.5,274" fill="none" stroke="#a6a640" stroke-width="1"/><path d="M663.3 221V239.5L821.5 292.5L902.3 231.8V213.3M821.5 274V292.5" stroke="#a6a640" stroke-width="1" fill="none"/><polygon points="706.9,210.3 755.6,186 790,196 859.7,231.9 862.5,236.6 789.4,250.6 783.75,219.7 702.2,216.9" fill="#b4b4a2" stroke="#404040" stroke-width="0.6"/><polygon points="714.4,210.3 754.7,187.8 790,198 853,231 789.4,247.8 782.8,219.1" fill="#5f90ee" stroke="#d0d0d0" stroke-width="1.2"/><path d="M825 215L853 231" stroke="#20a060" stroke-width="0.8"/><polygon points="702.2,216.9 783.75,219.7 789.4,250.6 862.5,236.6 862.5,243 784.7,262.8 778,227 702.2,224.4" fill="#56563f" stroke="#303020" stroke-width="0.5"/><path d="M742.9 233.3h18v14l-9 4-9-4z" fill="#d6d6c6" fill-opacity="0.8" stroke="#505040" stroke-width="0.6"/><path d="M742.9 240.3h18M751.9 233.3v18" stroke="#808070" stroke-width="0.4"/><path d="M808.5 256.75h18v14l-9 4-9-4z" fill="#d6d6c6" fill-opacity="0.8" stroke="#505040" stroke-width="0.6"/><path d="M808.5 263.75h18M817.5 256.75v18" stroke="#808070" stroke-width="0.4"/><path d="M853.5 219h18v14l-9 4-9-4z" fill="#d6d6c6" fill-opacity="0.8" stroke="#505040" stroke-width="0.6"/><path d="M853.5 226h18M862.5 219v18" stroke="#808070" stroke-width="0.4"/><path d="M740 256L792 224M760 258L806 232M705 240L742 226M805 262L850 238M820 270L860 248" stroke="#303030" stroke-width="0.5" fill="none"/><rect x="729" y="246" width="4" height="2" fill="#202020" transform="rotate(-25 731 247)"/><rect x="800" y="247" width="4" height="2" fill="#202020" transform="rotate(-25 802 248)"/><rect x="817" y="261" width="4" height="2" fill="#202020" transform="rotate(-25 819 262)"/><rect x="834" y="256" width="4" height="2" fill="#202020" transform="rotate(-25 836 257)"/><rect x="868" y="240" width="4" height="2" fill="#202020" transform="rotate(-25 870 241)"/><rect x="876" y="238" width="4" height="2" fill="#202020" transform="rotate(-25 878 239)"/><path d="M747 193.4 Q776 193 795 172 Q830 192 866.3 182 C840 190 822 205 818.4 226 Q806 198 747 193.4z" fill="#fbfbfb" stroke="#303030" stroke-width="0.8"/><path d="M747.2 193.4L751.9 239.4" stroke="#1f5f1f" stroke-width="1.9"/><path d="M818.4 228L817.5 262.8" stroke="#1f5f1f" stroke-width="1.9"/><path d="M866.3 181.25L862.5 224.4" stroke="#1f5f1f" stroke-width="1.9"/><path d="M795 165L795 174" stroke="#1f5f1f" stroke-width="1.9"/><path d="M747 193L795 150L866 181M795 150V171M805 148V172M795 156L866 168M866 181L880 190V232M870 188H885M757 186L800 160M755 200L795 176" stroke="#303030" stroke-width="0.55" stroke-dasharray="4 1.5 1 1.5" fill="none"/><path d="M820 193L860 210M815 198L855 214M750 205L790 185" stroke="#404040" stroke-width="0.5" stroke-dasharray="2 1" fill="none"/><rect x="712" y="375.3" width="145.6" height="21.7" fill="#dcdcc2" stroke="#b8b888" stroke-width="0.7"/><rect x="732" y="375.3" width="91" height="5.7" fill="#a4a48c"/><rect x="729" y="381" width="95" height="7.5" fill="#56563f"/><rect x="804" y="375.3" width="20" height="13" fill="#606048"/><rect x="740" y="388.5" width="23" height="9.5" fill="#a4a48c"/><rect x="822" y="375.3" width="24" height="22.7" fill="#8e8e78"/><rect x="824" y="376" width="32" height="6" fill="#d8d8c0" opacity="0.6"/><path d="M749.5 337 Q760 344 749.5 350 L792 344.5z" fill="#e4e4e4" stroke="#404040" stroke-width="0.6"/><path d="M835.5 337 Q825 344 835.5 350 L792 344.5z" fill="#3c3c3c" stroke="#303030" stroke-width="0.6"/><path d="M749 338.8H857M749 349.6H857M754.4 350V375M829.5 350V375" stroke="#505050" stroke-width="0.6" stroke-dasharray="3 1.2 1 1.2"/><path d="M749 336.5L752.5 389.4M835.5 336.5L832.3 389" stroke="#208a20" stroke-width="1.8"/><path d="M749 402.5H835M749 408H835M749 390V409M835 390V409M861.3 339V381M854 339H864M854 361H864M854 381H864" stroke="#202020" stroke-width="0.9" fill="none"/><rect x="790" y="401.0" width="4" height="2" fill="#202020"/><rect x="790" y="406.5" width="4" height="2" fill="#202020"/><rect x="750" y="401.0" width="4" height="2" fill="#202020"/><rect x="830" y="401.0" width="4" height="2" fill="#202020"/><rect x="855" y="348.5" width="4" height="2" fill="#202020"/><rect x="855" y="368.5" width="4" height="2" fill="#202020"/><rect x="452" y="414.5" width="193" height="154" fill="#dddbc5" stroke="#b4b478" stroke-width="1.2"/><polygon points="490,450.5 484.7,445 488.8,443 492.8,449.2 556.5,450.5 632.4,472.2 588.5,549.5 549.8,495.3 476.6,529" fill="#4a4a40"/><polygon points="492,453.5 556.5,453.5 628,474 588.5,545 549.8,491 480,525" fill="#bdbdb5"/><polygon points="494.2,456 556.5,456 623,475 588.5,540 549.8,488.5 484.7,518.3" fill="#5b8ef0" stroke="#2fa0d8" stroke-width="0.8"/><path d="M542 456 Q566 470 572 500 Q580 530 600 520 L623 475 L556.5 456z" fill="#7d9ee6" opacity="0.9"/><path d="M540 457 Q563 472 570 500 Q576 525 592 535" stroke="#30b0e8" stroke-width="0.8" fill="none"/><path d="M536 438.5H630" stroke="#303030" stroke-width="0.8" stroke-dasharray="5 1.5 1 1.5" fill="none"/><path d="M536 442.5H630" stroke="#303030" stroke-width="0.8" stroke-dasharray="5 1.5 1 1.5" fill="none"/><path d="M536 446.5H630" stroke="#303030" stroke-width="0.8" stroke-dasharray="5 1.5 1 1.5" fill="none"/><path d="M538 522.5H630" stroke="#303030" stroke-width="0.8" stroke-dasharray="5 1.5 1 1.5" fill="none"/><path d="M538 526.5H630" stroke="#303030" stroke-width="0.8" stroke-dasharray="5 1.5 1 1.5" fill="none"/><path d="M538 530.5H630" stroke="#303030" stroke-width="0.8" stroke-dasharray="5 1.5 1 1.5" fill="none"/><path d="M530.5 445V550" stroke="#303030" stroke-width="0.8" stroke-dasharray="5 1.5 1 1.5" fill="none"/><path d="M534.5 445V550" stroke="#303030" stroke-width="0.8" stroke-dasharray="5 1.5 1 1.5" fill="none"/><path d="M538.5 445V550" stroke="#303030" stroke-width="0.8" stroke-dasharray="5 1.5 1 1.5" fill="none"/><path d="M609.5 448V550" stroke="#303030" stroke-width="0.8" stroke-dasharray="5 1.5 1 1.5" fill="none"/><path d="M613.5 448V550" stroke="#303030" stroke-width="0.8" stroke-dasharray="5 1.5 1 1.5" fill="none"/><path d="M617.5 448V550" stroke="#303030" stroke-width="0.8" stroke-dasharray="5 1.5 1 1.5" fill="none"/><path d="M531 438 Q560 480 533 526M613 441 Q590 480 613 526M531 438 Q575 462 613 441M532 526 Q575 498 613 526" stroke="#202020" stroke-width="0.8" fill="none"/><polygon points="530.8,427.4 541.8,438.4 530.8,449.4 519.8,438.4" fill="#c9c6ad" stroke="#404040" stroke-width="0.8"/><path d="M527.8 435.4l6 6M533.8 435.4l-6 6" stroke="#202020" stroke-width="1.2"/><circle cx="530.8" cy="438.4" r="1.4" fill="#30c030"/><polygon points="613.4,430 624.4,441 613.4,452 602.4,441" fill="#c9c6ad" stroke="#404040" stroke-width="0.8"/><path d="M610.4 438l6 6M616.4 438l-6 6" stroke="#202020" stroke-width="1.2"/><circle cx="613.4" cy="441" r="1.4" fill="#30c030"/><polygon points="532.7,515.4 543.7,526.4 532.7,537.4 521.7,526.4" fill="#c9c6ad" stroke="#404040" stroke-width="0.8"/><path d="M529.7 523.4l6 6M535.7 523.4l-6 6" stroke="#202020" stroke-width="1.2"/><circle cx="532.7" cy="526.4" r="1.4" fill="#30c030"/><polygon points="613.4,515.4 624.4,526.4 613.4,537.4 602.4,526.4" fill="#c9c6ad" stroke="#404040" stroke-width="0.8"/><path d="M610.4 523.4l6 6M616.4 523.4l-6 6" stroke="#202020" stroke-width="1.2"/><circle cx="613.4" cy="526.4" r="1.4" fill="#30c030"/><path d="M531 548.5H615M531 553.5H615M635 438V528M640 438V528M628 438H646M628 528H646" stroke="#202020" stroke-width="0.9" fill="none"/><rect x="644" y="437" width="2" height="6" fill="#303030"/><rect x="644" y="523" width="2" height="6" fill="#303030"/><text x="530" y="563" font-size="3.5" font-weight="bold" font-family="Liberation Sans" fill="#202020" stroke="#000" stroke-width="0.4" textLength="7" lengthAdjust="spacingAndGlyphs">0.50</text><text x="610" y="563" font-size="3.5" font-weight="bold" font-family="Liberation Sans" fill="#202020" stroke="#000" stroke-width="0.4" textLength="7" lengthAdjust="spacingAndGlyphs">0.35</text><text x="808" y="447" font-size="6.3" font-family="Liberation Serif" fill="#000" stroke="#000" stroke-width="0.25" textLength="102" lengthAdjust="spacingAndGlyphs">Fundamentbewehrung - siehe Beiblatt !</text><text x="811" y="456" font-size="3.4" font-weight="bold" font-family="Liberation Serif" fill="#000" stroke="#000" stroke-width="0.3" textLength="51" lengthAdjust="spacingAndGlyphs">Alle Schweißnähte a=4.0mm</text><rect x="794.5" y="462" width="130" height="118.5" fill="none" stroke="#000" stroke-width="0.9"/><path d="M794.5 507.5H924.5M794.5 510.5H924.5M794.5 514H924.5M794.5 518H924.5M794.5 521.5H924.5M794.5 525.5H924.5M814.5 507.5V529.5M898.5 507.5V580.5M909.5 507.5V529.5" stroke="#000" stroke-width="0.6" fill="none"/><path d="M794.5 529.5H924.5M794.5 539H898M794.5 548H924.5M794.5 561H924.5M794.5 567.5H836M794.5 573.5H836M818 561V580.5M836 561V580.5" stroke="#000" stroke-width="0.8" fill="none"/><text x="799" y="468" font-size="3.2" font-weight="bold" font-family="Liberation Serif" fill="#000" stroke="#000" stroke-width="0.25" textLength="25" lengthAdjust="spacingAndGlyphs">MATERIAL:</text><text x="816" y="477" font-size="3.2" font-weight="bold" font-family="Liberation Serif" fill="#000" stroke="#000" stroke-width="0.25" textLength="54" lengthAdjust="spacingAndGlyphs">Rohr: - Typ (Ansatz: 108, Seil 8)</text><text x="816" y="483" font-size="3.2" font-weight="bold" font-family="Liberation Serif" fill="#000" stroke="#000" stroke-width="0.25" textLength="31" lengthAdjust="spacingAndGlyphs">Seil: - 6mm 1x19</text><text x="797" y="535" font-size="3.2" font-weight="bold" font-family="Liberation Serif" fill="#000" stroke="#000" stroke-width="0.25" textLength="17" lengthAdjust="spacingAndGlyphs">PROJEKT:</text><text x="827" y="536" font-size="3.2" font-weight="bold" font-family="Liberation Serif" fill="#000" stroke="#000" stroke-width="0.25" textLength="48" lengthAdjust="spacingAndGlyphs">4-Punkt Hyper Sonnensegel</text><text x="905" y="535" font-size="3.2" font-weight="bold" font-family="Liberation Serif" fill="#000" stroke="#000" stroke-width="0.25" textLength="8" lengthAdjust="spacingAndGlyphs">Auftrag</text><text x="797" y="543" font-size="3.2" font-weight="bold" font-family="Liberation Serif" fill="#000" stroke="#000" stroke-width="0.25" textLength="15" lengthAdjust="spacingAndGlyphs">BAUHERR:</text><text x="827" y="545" font-size="3.2" font-weight="bold" font-family="Liberation Serif" fill="#000" stroke="#000" stroke-width="0.25" textLength="16" lengthAdjust="spacingAndGlyphs">Familie Villa</text><text x="797" y="552" font-size="3.2" font-weight="bold" font-family="Liberation Serif" fill="#000" stroke="#000" stroke-width="0.25" textLength="15" lengthAdjust="spacingAndGlyphs">INHALT:</text><text x="827" y="556" font-size="3.2" font-weight="bold" font-family="Liberation Serif" fill="#000" stroke="#000" stroke-width="0.25" textLength="58" lengthAdjust="spacingAndGlyphs">Übersichtsplan, Ansicht, Fundamente</text><text x="903" y="551" font-size="3.2" font-weight="bold" font-family="Liberation Serif" fill="#000" stroke="#000" stroke-width="0.25" textLength="10" lengthAdjust="spacingAndGlyphs">Maßstab</text><text x="899" y="557" font-size="3.2" font-weight="bold" font-family="Liberation Serif" fill="#000" stroke="#000" stroke-width="0.25" textLength="15" lengthAdjust="spacingAndGlyphs">1:150, 1:100</text><text x="904" y="566" font-size="3.2" font-weight="bold" font-family="Liberation Serif" fill="#000" stroke="#000" stroke-width="0.25" textLength="9" lengthAdjust="spacingAndGlyphs">Blatt Nr.</text><text x="797" y="564" font-size="3.2" font-weight="bold" font-family="Liberation Serif" fill="#000" stroke="#000" stroke-width="0.25" textLength="8" lengthAdjust="spacingAndGlyphs">erstellt</text><text x="822" y="564" font-size="3.2" font-weight="bold" font-family="Liberation Serif" fill="#000" stroke="#000" stroke-width="0.25" textLength="4" lengthAdjust="spacingAndGlyphs">Ry</text><text x="797" y="570" font-size="3.2" font-weight="bold" font-family="Liberation Serif" fill="#000" stroke="#000" stroke-width="0.25" textLength="8" lengthAdjust="spacingAndGlyphs">geprüft</text><text x="822" y="570" font-size="3.2" font-weight="bold" font-family="Liberation Serif" fill="#000" stroke="#000" stroke-width="0.25" textLength="4" lengthAdjust="spacingAndGlyphs">Ry</text><text x="797" y="576" font-size="3.2" font-weight="bold" font-family="Liberation Serif" fill="#000" stroke="#000" stroke-width="0.25" textLength="7" lengthAdjust="spacingAndGlyphs">Datum</text><text x="820" y="576" font-size="3.2" font-weight="bold" font-family="Liberation Serif" fill="#000" stroke="#000" stroke-width="0.25" textLength="12" lengthAdjust="spacingAndGlyphs">26.09.12</text><text x="870" y="570" font-size="3.2" font-weight="bold" font-family="Liberation Serif" fill="#000" stroke="#000" stroke-width="0.25" textLength="16" lengthAdjust="spacingAndGlyphs">Landstrasse 4</text><text x="870" y="574" font-size="3.2" font-weight="bold" font-family="Liberation Serif" fill="#000" stroke="#000" stroke-width="0.25" textLength="16" lengthAdjust="spacingAndGlyphs">4020 Salzburg</text><text x="845" y="579" font-size="3.2" font-weight="bold" font-family="Liberation Serif" fill="#000" stroke="#000" stroke-width="0.25" textLength="32" lengthAdjust="spacingAndGlyphs">Tel. 0650-38XX, Fax XXXX</text><text x="797" y="528" font-size="3.2" font-weight="bold" font-family="Liberation Serif" fill="#000" stroke="#000" stroke-width="0.25" textLength="6" lengthAdjust="spacingAndGlyphs">Index</text><text x="816" y="528" font-size="3.2" font-weight="bold" font-family="Liberation Serif" fill="#000" stroke="#000" stroke-width="0.25" textLength="10" lengthAdjust="spacingAndGlyphs">Änderung</text><text x="899" y="528" font-size="3.2" font-weight="bold" font-family="Liberation Serif" fill="#000" stroke="#000" stroke-width="0.25" textLength="6" lengthAdjust="spacingAndGlyphs">Datum</text><text x="910" y="528" font-size="3.2" font-weight="bold" font-family="Liberation Serif" fill="#000" stroke="#000" stroke-width="0.25" textLength="8" lengthAdjust="spacingAndGlyphs">Name</text><text x="905" y="544" font-size="4.5" font-weight="bold" font-family="Liberation Serif" fill="#000" stroke="#000" stroke-width="0.3">12/013</text><text x="907" y="576" font-size="5" font-weight="bold" font-family="Liberation Serif" fill="#000" stroke="#000" stroke-width="0.3">01</text><text x="838" y="568" font-size="7" font-weight="bold" font-style="italic" font-family="Liberation Serif" fill="#000" stroke="#000" stroke-width="0.35" textLength="48" lengthAdjust="spacingAndGlyphs">Dipl.Ing. S.Rykdin</text></svg>
<div class="a" style="left:180px;top:652px;width:776px;height:1px;background:#fff"></div>
<div class="a" style="left:181px;top:653px;width:774px;height:14px;background:#0a246a"></div>
<div class="t" style="left:184px;top:655px;font-size:8.9px;transform:scaleX(0.885);color:#fff;font-size:9.38px">Befehlszeile</div>
<svg class="i" style="left:932px;top:655px" width="9" height="10" viewBox="0 0 9 10"><path d="M2 1h5M3 1v5M6 1v5M1 6h7M4.5 6v4" stroke="#fff" stroke-width="1.2" fill="none"/></svg>
<svg class="i" style="left:945px;top:656px" width="8" height="8" viewBox="0 0 8 8"><path d="M1 1l6 6M7 1l-6 6" stroke="#fff" stroke-width="1.6"/></svg>
<div class="a" style="left:183px;top:667px;width:773px;height:19px;background:#d4d0c8"></div>
<div class="sep" style="left:195px;top:669px;height:15px"></div>
<svg class="i" style="left:186px;top:671px" width="8" height="10" viewBox="0 0 8 10"><path d="M1 1v7l2-2 2 3 1-1-2-3h3z" fill="#e8e8e8" stroke="#909090" stroke-width="0.8"/></svg>
<div class="tbar" style="left:666px;top:667px;width:288px;height:19px"></div>
<svg class="i" style="left:670px;top:672px" width="10" height="10" viewBox="0 0 12 12"><path d="M2 2l8 8M2 2h1v1" stroke="#a0a0a0" stroke-width="1.1" fill="none"/><circle cx="2.5" cy="2.5" r="1.1" fill="#808080"/><circle cx="9" cy="9" r="1.1" fill="#808080"/></svg>
<svg class="i" style="left:684px;top:672px" width="10" height="10" viewBox="0 0 12 12"><path d="M2 2l8 8M5 5h1v1" stroke="#a0a0a0" stroke-width="1.1" fill="none"/><circle cx="2.5" cy="2.5" r="1.1" fill="#808080"/><circle cx="9" cy="9" r="1.1" fill="#808080"/></svg>
<svg class="i" style="left:698px;top:672px" width="10" height="10" viewBox="0 0 12 12"><path d="M9 6a3.5 3.5 0 1 1-1-2.5M6 7h2v2" stroke="#a0a0a0" stroke-width="1.1" fill="none"/><circle cx="2.5" cy="2.5" r="1.1" fill="#808080"/><circle cx="9" cy="9" r="1.1" fill="#808080"/></svg>
<svg class="i" style="left:711px;top:672px" width="10" height="10" viewBox="0 0 12 12"><path d="M2 2l8 8M10 2l-8 8" stroke="#a0a0a0" stroke-width="1.1" fill="none"/><circle cx="2.5" cy="2.5" r="1.1" fill="#808080"/><circle cx="9" cy="9" r="1.1" fill="#808080"/></svg>
<div class="sep" style="left:721px;top:669px;height:15px"></div>
<svg class="i" style="left:726px;top:672px" width="10" height="10" viewBox="0 0 12 12"><path d="M1 10l5-6 5 6M6 4v1" stroke="#a0a0a0" stroke-width="1.1" fill="none"/><circle cx="2.5" cy="2.5" r="1.1" fill="#808080"/><circle cx="9" cy="9" r="1.1" fill="#808080"/></svg>
<svg class="i" style="left:741px;top:672px" width="10" height="10" viewBox="0 0 12 12"><path d="M1 10l4-4 2 0 4-4M5 5l2 2" stroke="#a0a0a0" stroke-width="1.1" fill="none"/><circle cx="2.5" cy="2.5" r="1.1" fill="#808080"/><circle cx="9" cy="9" r="1.1" fill="#808080"/></svg>
<svg class="i" style="left:754px;top:672px" width="10" height="10" viewBox="0 0 12 12"><path d="M1 2h10M3 2l3 8 3-8M5 5h2" stroke="#a0a0a0" stroke-width="1.1" fill="none"/><circle cx="2.5" cy="2.5" r="1.1" fill="#808080"/><circle cx="9" cy="9" r="1.1" fill="#808080"/></svg>
<svg class="i" style="left:767px;top:672px" width="10" height="10" viewBox="0 0 12 12"><path d="M1 10l10-6M3 8h2" stroke="#a0a0a0" stroke-width="1.1" fill="none"/><circle cx="2.5" cy="2.5" r="1.1" fill="#808080"/><circle cx="9" cy="9" r="1.1" fill="#808080"/></svg>
<div class="sep" style="left:779px;top:669px;height:15px"></div>
<svg class="i" style="left:782px;top:671px" width="12" height="12" viewBox="0 0 12 12"><path d="M1 1l10 10" stroke="#e02020" stroke-width="1.2"/><path d="M4 1l3 6-3 4" stroke="#2020e0" stroke-width="1.6" fill="none"/><rect x="6" y="0.5" width="5" height="5" fill="#fff" stroke="#2020e0"/></svg>
<div class="sep" style="left:795px;top:669px;height:15px"></div>
<svg class="i" style="left:799px;top:671px" width="12" height="12" viewBox="0 0 12 12"><rect x="1" y="2" width="1.6" height="1.6" fill="#000"/><rect x="1" y="5" width="1.6" height="1.6" fill="#000"/><rect x="1" y="8" width="1.6" height="1.6" fill="#000"/><rect x="4" y="2" width="1.6" height="1.6" fill="#000"/><rect x="4" y="5" width="1.6" height="1.6" fill="#000"/><rect x="4" y="8" width="1.6" height="1.6" fill="#000"/><rect x="7" y="2" width="1.6" height="1.6" fill="#000"/><rect x="7" y="5" width="1.6" height="1.6" fill="#000"/><rect x="7" y="8" width="1.6" height="1.6" fill="#000"/><rect x="10" y="2" width="1.6" height="1.6" fill="#000"/><rect x="10" y="5" width="1.6" height="1.6" fill="#000"/><rect x="10" y="8" width="1.6" height="1.6" fill="#000"/><circle cx="2" cy="1" r="1.2" fill="#e02020"/></svg>
<svg class="i" style="left:812px;top:671px" width="12" height="12" viewBox="0 0 12 12"><path d="M2 10h9M5 2v8M8 4v6M3 3h6" stroke="#404040" stroke-width="1.2"/><circle cx="3" cy="2" r="1.2" fill="#e02020"/><path d="M4 11h6" stroke="#2020c0"/></svg>
<svg class="i" style="left:825px;top:671px" width="12" height="12" viewBox="0 0 12 12"><path d="M1 11l10-10M1 3l10 7" stroke="#404040" stroke-width="1.2"/><circle cx="5" cy="6" r="2" fill="#20d020"/><circle cx="2" cy="2" r="1.2" fill="#e02020"/></svg>
<div class="a" style="left:836px;top:668px;width:14px;height:17px;border:1px solid;border-color:#808080 #fff #fff #808080;background:#ecebe6"></div>
<div class="a" style="left:850px;top:668px;width:14px;height:17px;border:1px solid;border-color:#808080 #fff #fff #808080;background:#ecebe6"></div>
<svg class="i" style="left:838px;top:671px" width="12" height="12" viewBox="0 0 12 12"><path d="M2 2l9 9M2 2h4" stroke="#404040" stroke-width="1.2"/><circle cx="2" cy="2" r="1.3" fill="#e02020"/><circle cx="6" cy="6" r="1.6" fill="#e02020"/></svg>
<svg class="i" style="left:852px;top:671px" width="12" height="12" viewBox="0 0 12 12"><path d="M2 2l9 9M2 2h4" stroke="#404040" stroke-width="1.2"/><circle cx="2" cy="2" r="1.3" fill="#e02020"/><circle cx="8" cy="8" r="1.6" fill="#e02020"/></svg>
<svg class="i" style="left:864px;top:671px" width="12" height="12" viewBox="0 0 12 12"><path d="M2 2l8 8M10 2l-8 8M1 2h10" stroke="#404040" stroke-width="1.1"/><circle cx="2" cy="1.5" r="1.2" fill="#e02020"/><circle cx="6" cy="6" r="1.6" fill="#e02020"/></svg>
<svg class="i" style="left:877px;top:671px" width="12" height="12" viewBox="0 0 12 12"><path d="M1 2l4 8 6-8" stroke="#404040" stroke-width="1.1" fill="none"/><circle cx="2" cy="1.5" r="1.2" fill="#e02020"/><circle cx="10" cy="3" r="1.6" fill="#e02020"/><path d="M4 9l2-3" stroke="#2020c0" stroke-width="1.5"/></svg>
<svg class="i" style="left:890px;top:671px" width="12" height="12" viewBox="0 0 12 12"><path d="M1 10q8-2 9-9" stroke="#404040" stroke-width="1.2" fill="none"/><circle cx="3" cy="1.5" r="1.2" fill="#e02020"/><circle cx="9" cy="10" r="1.6" fill="#e02020"/></svg>
<svg class="i" style="left:903px;top:671px" width="12" height="12" viewBox="0 0 12 12"><path d="M2 2v8h8l-8-8M10 2l-8 8" stroke="#404040" stroke-width="1.1" fill="none"/><circle cx="2" cy="2" r="1.2" fill="#e02020"/><circle cx="10" cy="10" r="1.6" fill="#e02020"/></svg>
<svg class="i" style="left:915px;top:671px" width="12" height="12" viewBox="0 0 12 12"><path d="M2 10q2-6 8-8" stroke="#404040" stroke-width="1.2" fill="none"/><circle cx="2" cy="10" r="1.4" fill="#e02020"/><circle cx="10" cy="2" r="1.4" fill="#e02020"/><circle cx="6" cy="4" r="1.1" fill="#e02020"/></svg>
<div class="a" style="left:927px;top:668px;width:15px;height:17px;border:1px solid;border-color:#808080 #fff #fff #808080;background:#ecebe6"></div>
<svg class="i" style="left:929px;top:671px" width="12" height="12" viewBox="0 0 12 12"><path d="M1 5h10l-1 5h-9z" fill="#d0c040" stroke="#404000"/><path d="M1 10h10" stroke="#404040" stroke-width="1.5"/><circle cx="2" cy="2" r="1.4" fill="#e02020"/></svg>
<svg class="i" style="left:942px;top:671px" width="12" height="12" viewBox="0 0 12 12"><rect x="4" y="3" width="6" height="8" fill="#e0d060" stroke="#404000"/><path d="M5 5h4M5 7h4M5 9h4" stroke="#404000"/><circle cx="2" cy="2" r="1.4" fill="#e02020"/><path d="M2 3v6" stroke="#404040"/></svg>
<div class="a" style="left:186px;top:687px;width:769px;height:14px;background:#fff;border-style:solid;border-width:1px 0 0 1px;border-color:#404040"></div>
<div class="t" style="left:189px;top:689px;font-size:8.9px;transform:scaleX(0.885);font-size:9.27px">Befehl &gt;</div>
<div class="a" style="left:954px;top:65px;width:6px;height:638px;background:#d4d0c8"></div>
<div class="a" style="left:957px;top:65px;width:1px;height:637px;background:#5a5a5a"></div>
<div class="a" style="left:958px;top:130px;width:2px;height:572px;background:#ebebeb"></div>
<div class="a" style="left:958px;top:66px;width:2px;height:13px;background:#8c8c8c"></div>
<div class="a" style="left:958px;top:81px;width:2px;height:15px;background:#8c8c8c"></div>
<div class="a" style="left:958px;top:117px;width:2px;height:13px;background:#6a6a6a"></div>
<div class="a" style="left:0px;top:702px;width:960px;height:1px;background:#fff"></div>
<div class="a" style="left:2px;top:704px;width:74px;height:14px;border:1px solid;border-color:#808080 #fff #fff #808080"></div>
<div class="a" style="left:77px;top:704px;width:77px;height:14px;border:1px solid;border-color:#808080 #fff #fff #808080"></div>
<div class="a" style="left:155px;top:704px;width:22px;height:14px;border:1px solid;border-color:#808080 #fff #fff #808080"></div>
<div class="a" style="left:178px;top:704px;width:43px;height:14px;border:1px solid;border-color:#808080 #fff #fff #808080"></div>
<div class="t" style="left:160px;top:706px;font-size:8.9px;transform:scaleX(0.885);font-size:9.04px">mm</div>
<div class="t" style="left:183px;top:706px;font-size:8.9px;transform:scaleX(0.885);font-size:9.27px;width:41px;overflow:hidden">Ebene XY</div>
<div class="t" style="left:224px;top:706px;font-size:8.9px;transform:scaleX(0.885);font-size:9.27px">Bereit</div>
</body></html>
